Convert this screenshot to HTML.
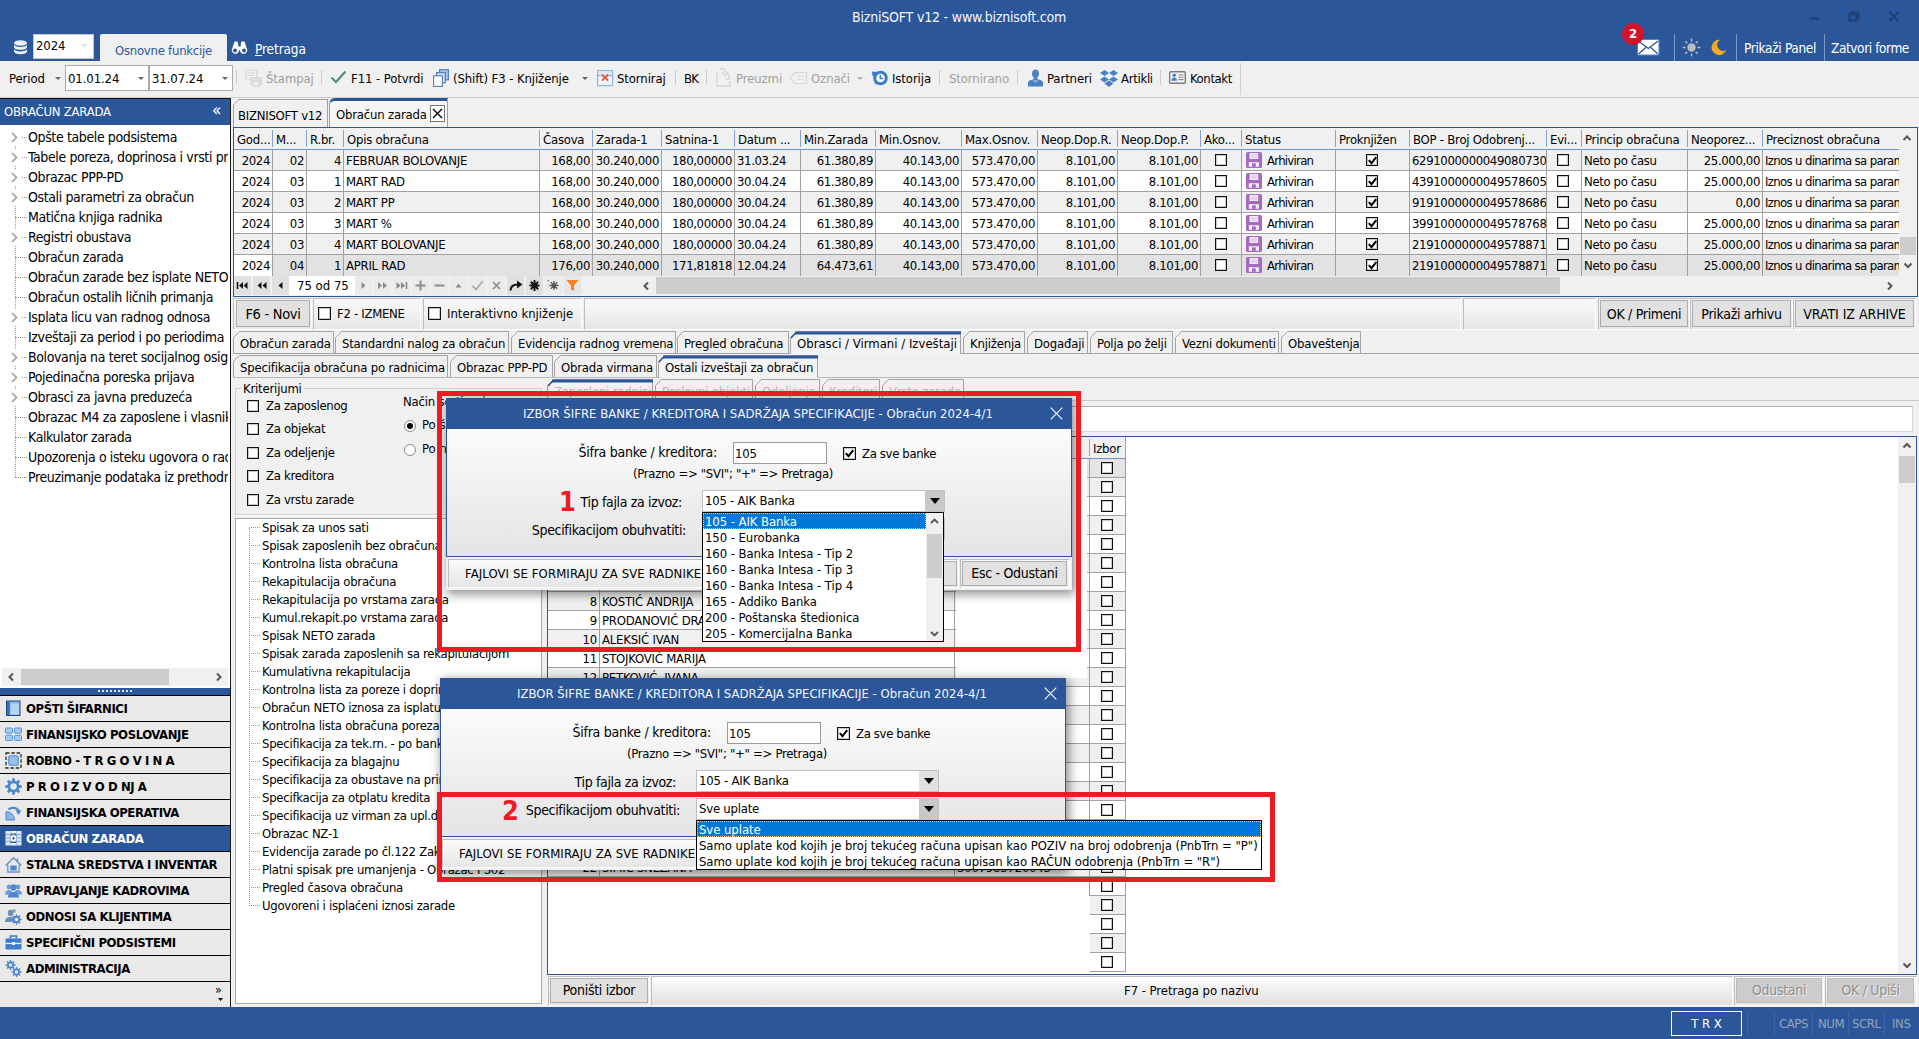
<!DOCTYPE html><html lang="sr"><head><meta charset="utf-8"><title>BizniSOFT v12</title><style>
*{box-sizing:border-box}
html,body{margin:0;padding:0}
body{width:1919px;height:1039px;overflow:hidden;background:#f0f0f0;position:relative;
 font-family:"DejaVu Sans Condensed","Liberation Sans",sans-serif;font-size:13px;color:#000;letter-spacing:-0.23px}
.a{position:absolute;white-space:nowrap}
.t{position:absolute;white-space:nowrap;line-height:16px}
.blue{background:#2b579a}
.w{color:#fff}
.f14{font-size:14px;letter-spacing:-0.3px}
.dis{color:#a0a0a0}
.tb{font-size:13px;letter-spacing:-0.1px;top:71px}
.sep{position:absolute;width:1px;background:#cdcdcd;top:70px;height:15px}
.inp{position:absolute;background:#fff;border:1px solid #ababab}
.btn{position:absolute;background:#e1e1e1;border:1px solid #adadad;text-align:center;font-size:14px;letter-spacing:-0.3px;white-space:nowrap}
.pnl{position:absolute;border:1px solid;border-color:#bdbdbd #fff #fff #bdbdbd;background:linear-gradient(#fafafa,#e6e6e6)}
.cb{position:absolute;width:13px;height:13px;border:1px solid #111;background:#fff;box-shadow:inset 0 0 0 1px rgba(0,0,0,.22)}
.tab{position:absolute;height:22px;background:#f0f0f0;border:1px solid #a0a0a0;border-bottom:none;border-radius:7px 0 0 0;padding:4px 0 0 6px;white-space:nowrap;font-size:13px;letter-spacing:-0.2px;line-height:16px;overflow:hidden}
.tab.sel{background:#f5f5f5;border-top:3px solid #2b579a;padding-top:4px}
.tree1{position:absolute;left:28px;font-size:14px;letter-spacing:-0.38px;line-height:20px;white-space:nowrap}
.tree2{position:absolute;left:262px;font-size:13px;letter-spacing:-0.27px;line-height:20px;white-space:nowrap}
.nav{position:absolute;left:0;width:230px;height:26px;background:#e9e9e9;border-top:1px solid #000;font-weight:bold;font-size:13px;letter-spacing:-0.42px;line-height:25px;padding-left:26px;white-space:nowrap}
.gh{position:absolute;top:128px;height:22px;line-height:24px;padding-left:3px;overflow:hidden;white-space:nowrap}
.gh.last:after{display:none}
.gh:after{content:'';position:absolute;right:0;top:2px;height:17px;width:1px;background:#86a3d8}
.gc{position:absolute;height:21px;line-height:22px;border-right:1px solid #a0a0a0;border-bottom:1px solid #a0a0a0;overflow:hidden;white-space:nowrap;padding:0 2px}
.r{text-align:right}
.c{text-align:center}
</style></head><body>
<div class="a blue" style="left:0;top:0;width:1919px;height:61px"></div>
<div class="t w" style="left:759px;width:400px;text-align:center;top:9px;font-size:14px;letter-spacing:-0.19px;color:#f4f6fa">BizniSOFT v12 - www.biznisoft.com</div>
<svg class="a" style="left:1800px;top:5px" width="110" height="26" viewBox="0 0 110 26"><g stroke="#1f3f75" stroke-width="2" fill="none"><path d="M9.500 13.700h9.500"/><path d="M49.500 9.500h7v6h-7z"/><path d="M51.500 9.500v-2h7v6h-2"/><path d="M89.500 7l9 9M98.500 7l-9 9" stroke-width="2.300"/></g></svg>
<svg class="a" style="left:12px;top:39px" width="17" height="17" viewBox="0 0 17 17"><g fill="#e9eef6"><ellipse cx="8.5" cy="4" rx="6.5" ry="2.8"/><path d="M2 5.6c1 1.8 3.600 2.4 6.5 2.4s5.500-.6 6.500-2.400v2.800c-1 1.800-3.600 2.400-6.500 2.400s-5.500-.6-6.500-2.400z"/><path d="M2 10c1 1.800 3.600 2.400 6.500 2.400s5.500-.6 6.500-2.400v2.800c-1 1.800-3.600 2.400-6.500 2.400s-5.500-.6-6.500-2.400z"/></g></svg>
<div class="inp" style="left:33px;top:34px;width:61px;height:25px;border-color:#c8c8c8"></div><div class="t" style="left:36px;top:38px;letter-spacing:-0.1px">2024</div>
<svg class="a" style="left:81px;top:44px" width="7" height="4"><path d="M0 0h7l-3.500 4z" fill="#e3e3e3"/></svg>
<div class="a" style="left:100px;top:34px;width:127px;height:28px;background:#f0f0f0;border-radius:2px 2px 0 0"></div><div class="t" style="left:115px;top:43px;color:#2b579a;letter-spacing:-0.25px;font-size:13px">Osnovne funkcije</div>
<svg class="a" style="left:231px;top:40px" width="17" height="15" viewBox="0 0 17 15"><g fill="#fff"><path d="M3.500 1.500h3l.7 2v3h2.600v-3l.7-2h3l2.500 7.500a3.600 3.600 0 1 1-7 1.200h-1a3.600 3.600 0 1 1-7-1.200z"/></g><circle cx="4" cy="10.500" r="2" fill="#2b579a"/><circle cx="13" cy="10.500" r="2" fill="#2b579a"/></svg>
<div class="t w" style="left:255px;top:41px;font-size:13.500px;letter-spacing:-0.1px"><span style="text-decoration:underline">P</span>retraga</div>
<svg class="a" style="left:1637px;top:39px" width="23" height="17" viewBox="0 0 23 17"><rect x="0.500" y="0.500" width="21.500" height="15.500" rx="1" fill="#fff" stroke="#4f86cf" stroke-width="1"/><path d="M1.500 2l9.800 7.500l9.800-7.500M1.500 15l7.300-6.500M21 15l-7.300-6.500" stroke="#2b579a" stroke-width="1.300" fill="none"/></svg>
<div class="a" style="left:1622px;top:23px;width:22px;height:22px;border-radius:11px;background:#d0142c"></div><div class="t w" style="left:1622px;width:22px;text-align:center;top:26px;font-weight:bold;font-size:13px;letter-spacing:0">2</div>
<div class="a" style="left:1674px;top:34px;width:1px;height:27px;background:#7f9ac4"></div>
<div class="a" style="left:1736px;top:34px;width:1px;height:27px;background:#7f9ac4"></div>
<div class="a" style="left:1824px;top:34px;width:1px;height:27px;background:#7f9ac4"></div>
<svg class="a" style="left:1682px;top:38px" width="19" height="19" viewBox="0 0 19 19"><circle cx="9.500" cy="9.500" r="4.200" fill="#b9bcc0"/><g stroke="#b9bcc0" stroke-width="1.500"><path d="M15.5 9.5L18.3 9.5"/><path d="M13.7 13.7L15.7 15.7"/><path d="M9.5 15.5L9.5 18.3"/><path d="M5.3 13.7L3.3 15.7"/><path d="M3.5 9.5L0.7 9.5"/><path d="M5.3 5.3L3.3 3.3"/><path d="M9.5 3.5L9.5 0.7"/><path d="M13.7 5.3L15.7 3.3"/></g></svg>
<svg class="a" style="left:1710px;top:39px" width="17" height="17" viewBox="0 0 17 17"><path d="M10 0.800a7.600 7.600 0 1 0 6.300 10.200a5.600 5.600 0 0 1-6.300-10.200z" fill="#f7a823"/></svg>
<div class="t w" style="left:1744px;top:40px;font-size:13.500px;letter-spacing:-0.3px">Prikaži Panel</div>
<div class="t w" style="left:1831px;top:40px;font-size:13.500px;letter-spacing:-0.4px">Zatvori forme</div>
<div class="a" style="left:0;top:61px;width:1919px;height:36px;background:#f0f0f0"></div><div class="a" style="left:0;top:97px;width:1919px;height:1px;background:#cfcfcf"></div>
<div class="t tb" style="left:9px">Period</div>
<svg class="a" style="left:55px;top:77px" width="6" height="3"><path d="M0 0h6l-3 3z" fill="#666"/></svg>
<div class="inp" style="left:65px;top:65px;width:84px;height:26px"></div><div class="t tb" style="left:68px">01.01.24</div>
<svg class="a" style="left:138px;top:77px" width="6" height="3"><path d="M0 0h6l-3 3z" fill="#666"/></svg>
<div class="inp" style="left:149px;top:65px;width:84px;height:26px"></div><div class="t tb" style="left:152px">31.07.24</div>
<svg class="a" style="left:222px;top:77px" width="6" height="3"><path d="M0 0h6l-3 3z" fill="#666"/></svg>
<div class="sep" style="left:236px"></div>
<div class="sep" style="left:321px"></div>
<div class="sep" style="left:675px"></div>
<div class="sep" style="left:706px"></div>
<div class="sep" style="left:939px"></div>
<div class="sep" style="left:1017px"></div>
<div class="sep" style="left:1160px"></div>
<div class="a" style="left:1240px;top:63px;width:1px;height:32px;background:#d0d0d0"></div>
<svg class="a" style="left:245px;top:69px" width="18" height="18" viewBox="0 0 18 18"><g fill="none" stroke="#d4d4d4" stroke-width="1.200"><path d="M1 1h11v9h-11z"/><path d="M3 4h7M3 6.500h7"/><rect x="6" y="9" width="10.500" height="6" fill="#e4e4e4"/><rect x="8" y="12" width="6.500" height="5" fill="#f0f0f0"/></g></svg>
<div class="t tb dis" style="left:266px">Štampaj</div>
<svg class="a" style="left:330px;top:70px" width="17" height="14" viewBox="0 0 17 14"><path d="M1.500 7.500l4.500 4.500l9.500-10.500" stroke="#4f9272" stroke-width="2.200" fill="none"/></svg>
<div class="t tb" style="left:351px">F11 - Potvrdi</div>
<svg class="a" style="left:432px;top:69px" width="18" height="19" viewBox="0 0 18 19"><g stroke="#4f7fc0" stroke-width="1.100"><rect x="7.600" y="0.600" width="8.800" height="10.200" fill="#a6c1e6"/><rect x="4.600" y="3.600" width="8.800" height="10.200" fill="#c9daf0"/><rect x="1.600" y="6.800" width="8.800" height="10.600" fill="#fbfcfe"/></g></svg>
<div class="t tb" style="left:453px">(Shift) F3 - Knjiženje</div>
<svg class="a" style="left:582px;top:77px" width="6" height="3"><path d="M0 0h6l-3 3z" fill="#666"/></svg>
<svg class="a" style="left:597px;top:70px" width="17" height="17" viewBox="0 0 17 17"><rect x="0.600" y="0.600" width="15" height="15" fill="#f1f6fc" stroke="#8fb3e0" stroke-width="1.200"/><rect x="1.200" y="1.200" width="13.800" height="4" fill="#dbe8f7"/><path d="M1 5.600h3.500M11.500 5.600h4" stroke="#8fb3e0" stroke-width="1.200"/><path d="M5 4.500l6.200 6.200M11.200 4.500l-6.200 6.200" stroke="#e0583a" stroke-width="1.900"/></svg>
<div class="t tb" style="left:617px">Storniraj</div>
<div class="t tb" style="left:684px;letter-spacing:-0.8px">BK</div>
<svg class="a" style="left:715px;top:68px" width="19" height="20" viewBox="0 0 19 20"><g fill="none" stroke="#d6d6d6" stroke-width="1.300"><path d="M2 3v15h13v-5"/><path d="M5 1l4 0l5 6v4h-4"/><path d="M7 4l3 3l4-1"/></g></svg>
<div class="t tb dis" style="left:736px">Preuzmi</div>
<svg class="a" style="left:789px;top:71px" width="19" height="14" viewBox="0 0 19 14"><path d="M6 1.500h11.500v11h-11.500l-5-5.500z" fill="none" stroke="#d8d8d8" stroke-width="1.200"/><path d="M8 5h7M8 8.500h7" stroke="#dcdcdc" stroke-width="1.200"/></svg>
<div class="t tb dis" style="left:811px">Označi</div>
<svg class="a" style="left:857px;top:77px" width="6" height="3"><path d="M0 0h6l-3 3z" fill="#b5b5b5"/></svg>
<svg class="a" style="left:871px;top:69px" width="18" height="18" viewBox="0 0 18 18"><circle cx="9.500" cy="9" r="5.800" fill="#fff" stroke="#3d7cc4" stroke-width="3"/><path d="M0.500 2.500l6 .5l-4.500 5z" fill="#3d7cc4"/><path d="M3 14l2.500-1l1 2.800z" fill="#3d7cc4"/><path d="M9.300 6v3.600h3" fill="none" stroke="#3d7cc4" stroke-width="1.500"/></svg>
<div class="t tb" style="left:892px">Istorija</div>
<div class="t tb dis" style="left:949px">Stornirano</div>
<svg class="a" style="left:1027px;top:69px" width="17" height="18" viewBox="0 0 17 18"><path d="M8.500 0.500c2.200 0 3.500 1.700 3.500 4c0 1.800-.7 3.300-1.700 4.100v1.300l4.200 1.700c1 .5 1.500 1.300 1.500 2.500v3.400h-15v-3.400c0-1.200.5-2 1.500-2.500l4.200-1.700v-1.300c-1-.8-1.700-2.300-1.700-4.100c0-2.300 1.300-4 3.500-4z" fill="#4a7fc0"/><path d="M6.300 10.800l2.200 2.400l2.200-2.400" stroke="#e8eef7" stroke-width=".9" fill="none"/></svg>
<div class="t tb" style="left:1047px">Partneri</div>
<svg class="a" style="left:1099px;top:70px" width="20" height="18" viewBox="0 0 20 18"><g fill="#4682c4"><path d="M5.500 0l4.500 3l-4.500 3l-4.500-3z"/><path d="M14.500 0l4.500 3l-4.500 3l-4.500-3z"/><path d="M5.500 6.500l4.500 3l-4.500 3l-4.500-3z"/><path d="M14.500 6.500l4.500 3l-4.500 3l-4.500-3z"/><path d="M10 10.500l4.500 3l-4.500 3.500l-4.500-3.500z"/></g></svg>
<div class="t tb" style="left:1121px;letter-spacing:-0.3px">Artikli</div>
<svg class="a" style="left:1169px;top:71px" width="17" height="13" viewBox="0 0 17 13"><rect x="0.700" y="0.700" width="15.600" height="11.600" rx="1" fill="#f4f4f4" stroke="#7c7c7c" stroke-width="1.400"/><circle cx="5.200" cy="4.300" r="1.700" fill="#4a7fc0"/><path d="M2.500 9.800c0-2.300 1.100-3.200 2.700-3.200s2.700.9 2.700 3.200z" fill="#4a7fc0"/><path d="M9.500 4h5M9.500 6.300h5M9.500 8.600h5" stroke="#8a8a8a" stroke-width="1.100"/></svg>
<div class="t tb" style="left:1190px;letter-spacing:-0.4px">Kontakt</div>
<div class="a" style="left:0;top:98px;width:231px;height:27px;background:#2b579a;border-top:1px solid #111;border-right:1px solid #111"></div>
<div class="t w" style="left:4px;top:104px;font-size:13px;letter-spacing:-0.25px">OBRAČUN ZARADA</div>
<div class="t w" style="left:212px;top:102px;font-size:17px">«</div>
<div class="a" style="left:0;top:125px;width:230px;height:563px;background:#fff"></div>
<div class="a" style="left:0;top:126px;width:228px;height:542px;background:#fff;overflow:hidden" id="ltree">
<div class="a" style="left:15px;top:11px;width:0;height:340px;border-left:1px dotted #9a9a9a"></div>
<div class="a" style="left:9px;top:3px;width:12px;height:16px;background:#fff"></div>
<svg class="a" style="left:11px;top:6px" width="7" height="11" viewBox="0 0 7 11"><path d="M1 1l4.500 4.500l-4.500 4.500" fill="none" stroke="#a0a0a0" stroke-width="1.700"/></svg>
<div class="a" style="left:22px;top:11px;width:5px;height:0;border-top:1px dotted #9a9a9a"></div>
<div class="tree1" style="top:1px">Opšte tabele podsistema</div>
<div class="a" style="left:9px;top:23px;width:12px;height:16px;background:#fff"></div>
<svg class="a" style="left:11px;top:26px" width="7" height="11" viewBox="0 0 7 11"><path d="M1 1l4.500 4.500l-4.500 4.500" fill="none" stroke="#a0a0a0" stroke-width="1.700"/></svg>
<div class="a" style="left:22px;top:31px;width:5px;height:0;border-top:1px dotted #9a9a9a"></div>
<div class="tree1" style="top:21px">Tabele poreza, doprinosa i vrsti prihoda</div>
<div class="a" style="left:9px;top:43px;width:12px;height:16px;background:#fff"></div>
<svg class="a" style="left:11px;top:46px" width="7" height="11" viewBox="0 0 7 11"><path d="M1 1l4.500 4.500l-4.500 4.500" fill="none" stroke="#a0a0a0" stroke-width="1.700"/></svg>
<div class="a" style="left:22px;top:51px;width:5px;height:0;border-top:1px dotted #9a9a9a"></div>
<div class="tree1" style="top:41px">Obrazac PPP-PD</div>
<div class="a" style="left:9px;top:63px;width:12px;height:16px;background:#fff"></div>
<svg class="a" style="left:11px;top:66px" width="7" height="11" viewBox="0 0 7 11"><path d="M1 1l4.500 4.500l-4.500 4.500" fill="none" stroke="#a0a0a0" stroke-width="1.700"/></svg>
<div class="a" style="left:22px;top:71px;width:5px;height:0;border-top:1px dotted #9a9a9a"></div>
<div class="tree1" style="top:61px">Ostali parametri za obračun</div>
<div class="a" style="left:15px;top:91px;width:12px;height:0;border-top:1px dotted #9a9a9a"></div>
<div class="tree1" style="top:81px">Matična knjiga radnika</div>
<div class="a" style="left:9px;top:103px;width:12px;height:16px;background:#fff"></div>
<svg class="a" style="left:11px;top:106px" width="7" height="11" viewBox="0 0 7 11"><path d="M1 1l4.500 4.500l-4.500 4.500" fill="none" stroke="#a0a0a0" stroke-width="1.700"/></svg>
<div class="a" style="left:22px;top:111px;width:5px;height:0;border-top:1px dotted #9a9a9a"></div>
<div class="tree1" style="top:101px">Registri obustava</div>
<div class="a" style="left:15px;top:131px;width:12px;height:0;border-top:1px dotted #9a9a9a"></div>
<div class="tree1" style="top:121px">Obračun zarada</div>
<div class="a" style="left:15px;top:151px;width:12px;height:0;border-top:1px dotted #9a9a9a"></div>
<div class="tree1" style="top:141px">Obračun zarade bez isplate NETO</div>
<div class="a" style="left:15px;top:171px;width:12px;height:0;border-top:1px dotted #9a9a9a"></div>
<div class="tree1" style="top:161px">Obračun ostalih ličnih primanja</div>
<div class="a" style="left:9px;top:183px;width:12px;height:16px;background:#fff"></div>
<svg class="a" style="left:11px;top:186px" width="7" height="11" viewBox="0 0 7 11"><path d="M1 1l4.500 4.500l-4.500 4.500" fill="none" stroke="#a0a0a0" stroke-width="1.700"/></svg>
<div class="a" style="left:22px;top:191px;width:5px;height:0;border-top:1px dotted #9a9a9a"></div>
<div class="tree1" style="top:181px">Isplata licu van radnog odnosa</div>
<div class="a" style="left:15px;top:211px;width:12px;height:0;border-top:1px dotted #9a9a9a"></div>
<div class="tree1" style="top:201px">Izveštaji za period i po periodima</div>
<div class="a" style="left:9px;top:223px;width:12px;height:16px;background:#fff"></div>
<svg class="a" style="left:11px;top:226px" width="7" height="11" viewBox="0 0 7 11"><path d="M1 1l4.500 4.500l-4.500 4.500" fill="none" stroke="#a0a0a0" stroke-width="1.700"/></svg>
<div class="a" style="left:22px;top:231px;width:5px;height:0;border-top:1px dotted #9a9a9a"></div>
<div class="tree1" style="top:221px">Bolovanja na teret socijalnog osiguranja</div>
<div class="a" style="left:9px;top:243px;width:12px;height:16px;background:#fff"></div>
<svg class="a" style="left:11px;top:246px" width="7" height="11" viewBox="0 0 7 11"><path d="M1 1l4.500 4.500l-4.500 4.500" fill="none" stroke="#a0a0a0" stroke-width="1.700"/></svg>
<div class="a" style="left:22px;top:251px;width:5px;height:0;border-top:1px dotted #9a9a9a"></div>
<div class="tree1" style="top:241px">Pojedinačna poreska prijava</div>
<div class="a" style="left:9px;top:263px;width:12px;height:16px;background:#fff"></div>
<svg class="a" style="left:11px;top:266px" width="7" height="11" viewBox="0 0 7 11"><path d="M1 1l4.500 4.500l-4.500 4.500" fill="none" stroke="#a0a0a0" stroke-width="1.700"/></svg>
<div class="a" style="left:22px;top:271px;width:5px;height:0;border-top:1px dotted #9a9a9a"></div>
<div class="tree1" style="top:261px">Obrasci za javna preduzeća</div>
<div class="a" style="left:15px;top:291px;width:12px;height:0;border-top:1px dotted #9a9a9a"></div>
<div class="tree1" style="top:281px">Obrazac M4 za zaposlene i vlasnike</div>
<div class="a" style="left:15px;top:311px;width:12px;height:0;border-top:1px dotted #9a9a9a"></div>
<div class="tree1" style="top:301px">Kalkulator zarada</div>
<div class="a" style="left:15px;top:331px;width:12px;height:0;border-top:1px dotted #9a9a9a"></div>
<div class="tree1" style="top:321px">Upozorenja o isteku ugovora o radu</div>
<div class="a" style="left:15px;top:351px;width:12px;height:0;border-top:1px dotted #9a9a9a"></div>
<div class="tree1" style="top:341px">Preuzimanje podataka iz prethodne godine</div>
</div>
<div class="a" style="left:2px;top:668px;width:226px;height:18px;background:#f0f0f0"></div><div class="a" style="left:21px;top:669px;width:148px;height:16px;background:#cdcdcd"></div>
<svg class="a" style="left:8px;top:672px" width="7" height="10" viewBox="0 0 7 10"><path d="M5 1.500l-3.500 3.500l3.500 3.500" fill="none" stroke="#555" stroke-width="2"/></svg>
<svg class="a" style="left:215px;top:672px" width="7" height="10" viewBox="0 0 7 10"><path d="M2 1.500l3.500 3.500l-3.500 3.500" fill="none" stroke="#555" stroke-width="2"/></svg>
<div class="a blue" style="left:0;top:688px;width:230px;height:8px"></div>
<div class="a" style="left:98px;top:690px;width:35px;height:2px;background:repeating-linear-gradient(90deg,#dfe6f2 0 2px,transparent 2px 4px)"></div>
<div class="nav" style="top:695px;">OPŠTI ŠIFARNICI</div>
<svg class="a" style="left:5px;top:700px" width="17" height="17" viewBox="0 0 17 17"><rect x="1.500" y="1" width="13.500" height="14.500" fill="#86b7ec" stroke="#24477d"/><rect x="2" y="1.500" width="2.800" height="13.500" fill="#3b6db3"/><rect x="5.500" y="3.500" width="8.500" height="11" fill="#b4d6f6"/></svg>
<div class="nav" style="top:721px;">FINANSIJSKO POSLOVANJE</div>
<svg class="a" style="left:5px;top:726px" width="17" height="17" viewBox="0 0 17 17"><g fill="#a3cbf2" stroke="#5b93d6"><rect x="0.500" y="2" width="7" height="5.200" rx="1"/><rect x="9.500" y="2" width="7" height="5.200" rx="1"/><rect x="0.500" y="9.300" width="7" height="5.200" rx="1"/><rect x="9.500" y="9.300" width="7" height="5.200" rx="1"/></g></svg>
<div class="nav" style="top:747px;">ROBNO - T R G O V I N A</div>
<svg class="a" style="left:5px;top:752px" width="17" height="17" viewBox="0 0 17 17"><rect x="1" y="1" width="15" height="15" fill="none" stroke="#2b2b2b" stroke-width="1.300" stroke-dasharray="3.500 1.800"/><rect x="3.800" y="3.800" width="9.400" height="9.400" rx="1" fill="#94c0ef" stroke="#4f86cc"/></svg>
<div class="nav" style="top:773px;">P R O I Z V O D NJ A</div>
<svg class="a" style="left:5px;top:778px" width="17" height="17" viewBox="0 0 17 17"><path d="M14.33 7.10L16.72 7.33L16.72 9.67L14.33 9.90L13.62 11.63L15.14 13.48L13.48 15.14L11.63 13.62L9.90 14.33L9.67 16.72L7.33 16.72L7.10 14.33L5.37 13.62L3.52 15.14L1.86 13.48L3.38 11.63L2.67 9.90L0.28 9.67L0.28 7.33L2.67 7.10L3.38 5.37L1.86 3.52L3.52 1.86L5.37 3.38L7.10 2.67L7.33 0.28L9.67 0.28L9.90 2.67L11.63 3.38L13.48 1.86L15.14 3.52L13.62 5.37ZM11.70 8.5A3.2 3.2 0 1 0 5.30 8.5A3.2 3.2 0 1 0 11.70 8.5Z" fill="#4a86cf" fill-rule="evenodd"/></svg>
<div class="nav" style="top:799px;">FINANSIJSKA OPERATIVA</div>
<svg class="a" style="left:5px;top:804px" width="17" height="17" viewBox="0 0 17 17"><path d="M1 16v-8.500a8.500 8.500 0 0 1 8.500 8.500z" fill="#86b7ec" stroke="#4f86cc"/><path d="M3.500 5.500a6.500 5.500 0 0 1 10.500 1.500" fill="none" stroke="#4f86cc" stroke-width="2.200"/><path d="M10.500 6.500h6l-3 4.500z" fill="#4f86cc"/></svg>
<div class="nav" style="top:825px;background:#2b579a;color:#fff;">OBRAČUN ZARADA</div>
<svg class="a" style="left:5px;top:830px" width="17" height="17" viewBox="0 0 17 17"><rect x="0.500" y="1" width="5" height="14.500" fill="#dbe7f7"/><rect x="11.500" y="1" width="5" height="14.500" fill="#dbe7f7"/><path d="M.5 4.500h5M.5 8h5M.5 11.500h5M11.500 4.500h5M11.500 8h5M11.500 11.500h5" stroke="#7fa6da"/><rect x="5.500" y="1" width="6" height="2.500" fill="#eef3fa"/><rect x="5.500" y="13" width="6" height="2.500" fill="#eef3fa"/><circle cx="8.500" cy="8.300" r="3.600" fill="#fff" stroke="#7fa6da"/><path d="M7 8.300h3M8.500 6.800v3" stroke="#2b579a"/></svg>
<div class="nav" style="top:851px;">STALNA SREDSTVA I INVENTAR</div>
<svg class="a" style="left:5px;top:856px" width="17" height="17" viewBox="0 0 17 17"><path d="M.8 9.500l7.700-7.700l7.700 7.700" fill="none" stroke="#6d93c4" stroke-width="1.600"/><path d="M12.500 2.500v3.500" stroke="#6d93c4" stroke-width="1.600"/><path d="M2.800 8.500v7.500h11.400v-7.500" fill="none" stroke="#6d93c4" stroke-width="1.300"/><rect x="5.300" y="9.500" width="6.400" height="5" fill="#4f86cc"/></svg>
<div class="nav" style="top:877px;">UPRAVLJANJE KADROVIMA</div>
<svg class="a" style="left:5px;top:882px" width="17" height="17" viewBox="0 0 17 17"><g fill="#6a9bd8"><circle cx="4" cy="5" r="2.400"/><circle cx="13" cy="5" r="2.400"/><path d="M0 12.500c0-3 1.500-4.500 4-4.500s3 1 3 2v2.500zM17 12.500c0-3-1.500-4.500-4-4.500s-3 1-3 2v2.500z"/></g><g fill="#4f86cc"><ellipse cx="8.500" cy="5.500" rx="2.800" ry="3.300"/><path d="M3 15.500c0-4 2.300-5.500 5.500-5.500s5.500 1.500 5.500 5.500z"/></g></svg>
<div class="nav" style="top:903px;">ODNOSI SA KLIJENTIMA</div>
<svg class="a" style="left:5px;top:908px" width="17" height="17" viewBox="0 0 17 17"><g fill="#6f8db5"><ellipse cx="5.500" cy="5" rx="2.700" ry="3.200"/><path d="M0 14c0-3.500 2-5 5.500-5c1.500 0 2.500.3 3.300.8l-1.300 4.200z"/><circle cx="9" cy="3" r="2" opacity=".7"/></g><path d="M15.10 10.64L16.75 10.75L16.75 12.25L15.10 12.36L14.65 13.43L15.74 14.68L14.68 15.74L13.43 14.65L12.36 15.10L12.25 16.75L10.75 16.75L10.64 15.10L9.57 14.65L8.32 15.74L7.26 14.68L8.35 13.43L7.90 12.36L6.25 12.25L6.25 10.75L7.90 10.64L8.35 9.57L7.26 8.32L8.32 7.26L9.57 8.35L10.64 7.90L10.75 6.25L12.25 6.25L12.36 7.90L13.43 8.35L14.68 7.26L15.74 8.32L14.65 9.57ZM13.30 11.5A1.8 1.8 0 1 0 9.70 11.5A1.8 1.8 0 1 0 13.30 11.5Z" fill="#4f86cc" fill-rule="evenodd"/></svg>
<div class="nav" style="top:929px;">SPECIFIČNI PODSISTEMI</div>
<svg class="a" style="left:5px;top:934px" width="17" height="17" viewBox="0 0 17 17"><path d="M5.500 4.500v-2.500h6v2.500" fill="none" stroke="#3f7ccb" stroke-width="1.600"/><rect x="0.500" y="4.500" width="16" height="11" rx="1" fill="#3f7ccb"/><rect x="0.500" y="8.800" width="16" height="1.300" fill="#e6eef9"/><rect x="7" y="8" width="3" height="3" fill="#e6eef9"/></svg>
<div class="nav" style="top:955px;">ADMINISTRACIJA</div>
<svg class="a" style="left:5px;top:960px" width="17" height="17" viewBox="0 0 17 17"><path d="M8.90 4.18L10.45 4.30L10.45 5.70L8.90 5.82L8.48 6.83L9.50 8.00L8.50 9.00L7.33 7.98L6.32 8.40L6.20 9.95L4.80 9.95L4.68 8.40L3.67 7.98L2.50 9.00L1.50 8.00L2.52 6.83L2.10 5.82L0.55 5.70L0.55 4.30L2.10 4.18L2.52 3.17L1.50 2.00L2.50 1.00L3.67 2.02L4.68 1.60L4.80 0.05L6.20 0.05L6.32 1.60L7.33 2.02L8.50 1.00L9.50 2.00L8.48 3.17ZM7.20 5A1.7 1.7 0 1 0 3.80 5A1.7 1.7 0 1 0 7.20 5Z" fill="#4f86cc" fill-rule="evenodd"/><path d="M14.90 11.18L16.45 11.30L16.45 12.70L14.90 12.82L14.48 13.83L15.50 15.00L14.50 16.00L13.33 14.98L12.32 15.40L12.20 16.95L10.80 16.95L10.68 15.40L9.67 14.98L8.50 16.00L7.50 15.00L8.52 13.83L8.10 12.82L6.55 12.70L6.55 11.30L8.10 11.18L8.52 10.17L7.50 9.00L8.50 8.00L9.67 9.02L10.68 8.60L10.80 7.05L12.20 7.05L12.32 8.60L13.33 9.02L14.50 8.00L15.50 9.00L14.48 10.17ZM13.20 12A1.7 1.7 0 1 0 9.80 12A1.7 1.7 0 1 0 13.20 12Z" fill="#4f86cc" fill-rule="evenodd"/></svg>
<div class="a" style="left:0;top:981px;width:230px;height:26px;background:#e9e9e9;border-top:1px solid #000"></div>
<div class="t" style="left:215px;top:982px;font-size:12px">»</div>
<svg class="a" style="left:218px;top:998px" width="5" height="3"><path d="M0 0h5l-2.500 3z" fill="#000"/></svg>
<div class="a" style="left:230px;top:98px;width:1px;height:909px;background:#1a1a1a"></div>
<div class="a blue" style="left:0;top:1007px;width:1919px;height:32px"></div>
<div class="a" style="left:1671px;top:1011px;width:71px;height:25px;border:1px solid #fff"></div><div class="t w" style="left:1671px;width:71px;text-align:center;top:1016px;font-size:13px;letter-spacing:0">T R X</div>
<div class="a" style="left:1747px;top:1011px;width:1px;height:25px;background:#3a66a8"></div>
<div class="a" style="left:1774px;top:1011px;width:1px;height:25px;background:#3a66a8"></div>
<div class="a" style="left:1812px;top:1011px;width:1px;height:25px;background:#3a66a8"></div>
<div class="a" style="left:1848px;top:1011px;width:1px;height:25px;background:#3a66a8"></div>
<div class="a" style="left:1884px;top:1011px;width:1px;height:25px;background:#3a66a8"></div>
<div class="t" style="left:1779px;top:1016px;color:#94a3ba;letter-spacing:-0.4px">CAPS</div>
<div class="t" style="left:1818px;top:1016px;color:#94a3ba;letter-spacing:-0.4px">NUM</div>
<div class="t" style="left:1852px;top:1016px;color:#94a3ba;letter-spacing:-0.4px">SCRL</div>
<div class="t" style="left:1892px;top:1016px;color:#94a3ba;letter-spacing:-0.4px">INS</div>
<div class="tab" style="left:233px;top:99px;width:95px;height:28px;font-size:13px;letter-spacing:-0.25px;padding:8px 0 0 4px;border-radius:0;clip-path:polygon(6px 0,100% 0,100% 100%,0 100%,0 6px)">BIZNISOFT v12</div><svg class="a" style="left:233px;top:99px" width="7" height="7"><path d="M0 6.500L6.500 0" stroke="#a0a0a0"/></svg>
<div class="tab sel" style="left:329px;top:98px;width:119px;height:29px;font-size:13px;letter-spacing:-0.2px;padding:6px 0 0 6px;border-radius:6px 0 0 0">Obračun zarada</div>
<div class="a" style="left:430px;top:105px;width:15px;height:17px;border:1px solid #777;background:#fff"></div><svg class="a" style="left:432px;top:108px" width="11" height="11" viewBox="0 0 11 11"><path d="M1 1l9 9M10 1l-9 9" stroke="#000" stroke-width="1.400"/></svg>
<div class="a" style="left:233px;top:127px;width:1685px;height:170px;background:#f0f0f0;border:1px solid #2b579a"></div>
<div class="a" style="left:234px;top:128px;width:1665px;height:22px;background:#f0f0f0;border-bottom:1px solid #6f93c9"></div>
<div class="gh" style="left:234px;width:39px">God...</div>
<div class="gh" style="left:273px;width:34px">M...</div>
<div class="gh" style="left:307px;width:37px">R.br.</div>
<div class="gh" style="left:344px;width:196px">Opis obračuna</div>
<div class="gh" style="left:540px;width:53px">Časova</div>
<div class="gh" style="left:593px;width:69px">Zarada-1</div>
<div class="gh" style="left:662px;width:73px">Satnina-1</div>
<div class="gh" style="left:735px;width:66px">Datum ...</div>
<div class="gh" style="left:801px;width:75px">Min.Zarada</div>
<div class="gh" style="left:876px;width:86px">Min.Osnov.</div>
<div class="gh" style="left:962px;width:76px">Max.Osnov.</div>
<div class="gh" style="left:1038px;width:80px">Neop.Dop.R.</div>
<div class="gh" style="left:1118px;width:83px">Neop.Dop.P.</div>
<div class="gh" style="left:1201px;width:41px">Ako...</div>
<div class="gh" style="left:1242px;width:94px">Status</div>
<div class="gh" style="left:1336px;width:74px">Proknjižen</div>
<div class="gh" style="left:1410px;width:137px">BOP - Broj Odobrenj...</div>
<div class="gh" style="left:1547px;width:35px">Evi...</div>
<div class="gh" style="left:1582px;width:106px">Princip obračuna</div>
<div class="gh" style="left:1688px;width:75px">Neoporez...</div>
<div class="gh last" style="left:1763px;width:136px">Preciznost obračuna</div>
<div class="gc r" style="left:234px;top:150px;width:39px;background:#f0f0f0;letter-spacing:-0.36px;">2024</div>
<div class="gc r" style="left:273px;top:150px;width:34px;background:#f0f0f0;letter-spacing:-0.36px;">02</div>
<div class="gc r" style="left:307px;top:150px;width:37px;background:#f0f0f0;letter-spacing:-0.36px;">4</div>
<div class="gc " style="left:344px;top:150px;width:196px;background:#f0f0f0;letter-spacing:-0.25px;">FEBRUAR BOLOVANJE</div>
<div class="gc r" style="left:540px;top:150px;width:53px;background:#f0f0f0;letter-spacing:-0.36px;">168,00</div>
<div class="gc r" style="left:593px;top:150px;width:69px;background:#f0f0f0;letter-spacing:-0.36px;">30.240,000</div>
<div class="gc r" style="left:662px;top:150px;width:73px;background:#f0f0f0;letter-spacing:-0.36px;">180,00000</div>
<div class="gc " style="left:735px;top:150px;width:66px;background:#f0f0f0;letter-spacing:-0.36px;">31.03.24</div>
<div class="gc r" style="left:801px;top:150px;width:75px;background:#f0f0f0;letter-spacing:-0.36px;">61.380,89</div>
<div class="gc r" style="left:876px;top:150px;width:86px;background:#f0f0f0;letter-spacing:-0.36px;">40.143,00</div>
<div class="gc r" style="left:962px;top:150px;width:76px;background:#f0f0f0;letter-spacing:-0.36px;">573.470,00</div>
<div class="gc r" style="left:1038px;top:150px;width:80px;background:#f0f0f0;letter-spacing:-0.36px;">8.101,00</div>
<div class="gc r" style="left:1118px;top:150px;width:83px;background:#f0f0f0;letter-spacing:-0.36px;">8.101,00</div>
<div class="gc" style="left:1201px;top:150px;width:41px;background:#f0f0f0"></div><div class="cb" style="left:1215px;top:154px;width:12px;height:12px"></div>
<div class="gc" style="left:1242px;top:150px;width:94px;background:#f0f0f0;padding-left:25px;letter-spacing:-0.72px">Arhiviran</div><svg class="a" style="left:1246px;top:152px" width="16" height="16" viewBox="0 0 16 16"><rect x="0" y="0" width="16" height="16" rx="1.600" fill="#a66bbe"/><rect x="3.600" y="1" width="8.600" height="6" fill="#f3eaf8"/><path d="M5 3h6M5 5h6" stroke="#cdbbd8" stroke-width=".9"/><rect x="2.800" y="10.200" width="10.200" height="4.600" fill="#f3eaf8"/><rect x="6" y="11.400" width="3.800" height="3.400" fill="#a66bbe"/></svg>
<div class="gc" style="left:1336px;top:150px;width:74px;background:#f0f0f0"></div><div class="cb" style="left:1366px;top:154px;width:12px;height:12px"></div><svg class="a" style="left:1368px;top:156px" width="9" height="9" viewBox="0 0 9 9"><path d="M0.800 4.200l2.700 3l4.700-6" fill="none" stroke="#000" stroke-width="2"/></svg>
<div class="gc " style="left:1410px;top:150px;width:137px;background:#f0f0f0;letter-spacing:-0.36px;">6291000000049080730</div>
<div class="gc" style="left:1547px;top:150px;width:35px;background:#f0f0f0"></div><div class="cb" style="left:1557px;top:154px;width:12px;height:12px"></div>
<div class="gc " style="left:1582px;top:150px;width:106px;background:#f0f0f0;letter-spacing:-0.36px;">Neto po času</div>
<div class="gc r" style="left:1688px;top:150px;width:75px;background:#f0f0f0;letter-spacing:-0.36px;">25.000,00</div>
<div class="gc " style="left:1763px;top:150px;width:136px;background:#f0f0f0;letter-spacing:-0.65px;border-right:none;">Iznos u dinarima sa parama</div>
<div class="gc r" style="left:234px;top:171px;width:39px;background:#fff;letter-spacing:-0.36px;">2024</div>
<div class="gc r" style="left:273px;top:171px;width:34px;background:#fff;letter-spacing:-0.36px;">03</div>
<div class="gc r" style="left:307px;top:171px;width:37px;background:#fff;letter-spacing:-0.36px;">1</div>
<div class="gc " style="left:344px;top:171px;width:196px;background:#fff;letter-spacing:-0.25px;">MART RAD</div>
<div class="gc r" style="left:540px;top:171px;width:53px;background:#fff;letter-spacing:-0.36px;">168,00</div>
<div class="gc r" style="left:593px;top:171px;width:69px;background:#fff;letter-spacing:-0.36px;">30.240,000</div>
<div class="gc r" style="left:662px;top:171px;width:73px;background:#fff;letter-spacing:-0.36px;">180,00000</div>
<div class="gc " style="left:735px;top:171px;width:66px;background:#fff;letter-spacing:-0.36px;">30.04.24</div>
<div class="gc r" style="left:801px;top:171px;width:75px;background:#fff;letter-spacing:-0.36px;">61.380,89</div>
<div class="gc r" style="left:876px;top:171px;width:86px;background:#fff;letter-spacing:-0.36px;">40.143,00</div>
<div class="gc r" style="left:962px;top:171px;width:76px;background:#fff;letter-spacing:-0.36px;">573.470,00</div>
<div class="gc r" style="left:1038px;top:171px;width:80px;background:#fff;letter-spacing:-0.36px;">8.101,00</div>
<div class="gc r" style="left:1118px;top:171px;width:83px;background:#fff;letter-spacing:-0.36px;">8.101,00</div>
<div class="gc" style="left:1201px;top:171px;width:41px;background:#fff"></div><div class="cb" style="left:1215px;top:175px;width:12px;height:12px"></div>
<div class="gc" style="left:1242px;top:171px;width:94px;background:#fff;padding-left:25px;letter-spacing:-0.72px">Arhiviran</div><svg class="a" style="left:1246px;top:173px" width="16" height="16" viewBox="0 0 16 16"><rect x="0" y="0" width="16" height="16" rx="1.600" fill="#a66bbe"/><rect x="3.600" y="1" width="8.600" height="6" fill="#f3eaf8"/><path d="M5 3h6M5 5h6" stroke="#cdbbd8" stroke-width=".9"/><rect x="2.800" y="10.200" width="10.200" height="4.600" fill="#f3eaf8"/><rect x="6" y="11.400" width="3.800" height="3.400" fill="#a66bbe"/></svg>
<div class="gc" style="left:1336px;top:171px;width:74px;background:#fff"></div><div class="cb" style="left:1366px;top:175px;width:12px;height:12px"></div><svg class="a" style="left:1368px;top:177px" width="9" height="9" viewBox="0 0 9 9"><path d="M0.800 4.200l2.700 3l4.700-6" fill="none" stroke="#000" stroke-width="2"/></svg>
<div class="gc " style="left:1410px;top:171px;width:137px;background:#fff;letter-spacing:-0.36px;">4391000000049578605</div>
<div class="gc" style="left:1547px;top:171px;width:35px;background:#fff"></div><div class="cb" style="left:1557px;top:175px;width:12px;height:12px"></div>
<div class="gc " style="left:1582px;top:171px;width:106px;background:#fff;letter-spacing:-0.36px;">Neto po času</div>
<div class="gc r" style="left:1688px;top:171px;width:75px;background:#fff;letter-spacing:-0.36px;">25.000,00</div>
<div class="gc " style="left:1763px;top:171px;width:136px;background:#fff;letter-spacing:-0.65px;border-right:none;">Iznos u dinarima sa parama</div>
<div class="gc r" style="left:234px;top:192px;width:39px;background:#f0f0f0;letter-spacing:-0.36px;">2024</div>
<div class="gc r" style="left:273px;top:192px;width:34px;background:#f0f0f0;letter-spacing:-0.36px;">03</div>
<div class="gc r" style="left:307px;top:192px;width:37px;background:#f0f0f0;letter-spacing:-0.36px;">2</div>
<div class="gc " style="left:344px;top:192px;width:196px;background:#f0f0f0;letter-spacing:-0.25px;">MART PP</div>
<div class="gc r" style="left:540px;top:192px;width:53px;background:#f0f0f0;letter-spacing:-0.36px;">168,00</div>
<div class="gc r" style="left:593px;top:192px;width:69px;background:#f0f0f0;letter-spacing:-0.36px;">30.240,000</div>
<div class="gc r" style="left:662px;top:192px;width:73px;background:#f0f0f0;letter-spacing:-0.36px;">180,00000</div>
<div class="gc " style="left:735px;top:192px;width:66px;background:#f0f0f0;letter-spacing:-0.36px;">30.04.24</div>
<div class="gc r" style="left:801px;top:192px;width:75px;background:#f0f0f0;letter-spacing:-0.36px;">61.380,89</div>
<div class="gc r" style="left:876px;top:192px;width:86px;background:#f0f0f0;letter-spacing:-0.36px;">40.143,00</div>
<div class="gc r" style="left:962px;top:192px;width:76px;background:#f0f0f0;letter-spacing:-0.36px;">573.470,00</div>
<div class="gc r" style="left:1038px;top:192px;width:80px;background:#f0f0f0;letter-spacing:-0.36px;">8.101,00</div>
<div class="gc r" style="left:1118px;top:192px;width:83px;background:#f0f0f0;letter-spacing:-0.36px;">8.101,00</div>
<div class="gc" style="left:1201px;top:192px;width:41px;background:#f0f0f0"></div><div class="cb" style="left:1215px;top:196px;width:12px;height:12px"></div>
<div class="gc" style="left:1242px;top:192px;width:94px;background:#f0f0f0;padding-left:25px;letter-spacing:-0.72px">Arhiviran</div><svg class="a" style="left:1246px;top:194px" width="16" height="16" viewBox="0 0 16 16"><rect x="0" y="0" width="16" height="16" rx="1.600" fill="#a66bbe"/><rect x="3.600" y="1" width="8.600" height="6" fill="#f3eaf8"/><path d="M5 3h6M5 5h6" stroke="#cdbbd8" stroke-width=".9"/><rect x="2.800" y="10.200" width="10.200" height="4.600" fill="#f3eaf8"/><rect x="6" y="11.400" width="3.800" height="3.400" fill="#a66bbe"/></svg>
<div class="gc" style="left:1336px;top:192px;width:74px;background:#f0f0f0"></div><div class="cb" style="left:1366px;top:196px;width:12px;height:12px"></div><svg class="a" style="left:1368px;top:198px" width="9" height="9" viewBox="0 0 9 9"><path d="M0.800 4.200l2.700 3l4.700-6" fill="none" stroke="#000" stroke-width="2"/></svg>
<div class="gc " style="left:1410px;top:192px;width:137px;background:#f0f0f0;letter-spacing:-0.36px;">9191000000049578686</div>
<div class="gc" style="left:1547px;top:192px;width:35px;background:#f0f0f0"></div><div class="cb" style="left:1557px;top:196px;width:12px;height:12px"></div>
<div class="gc " style="left:1582px;top:192px;width:106px;background:#f0f0f0;letter-spacing:-0.36px;">Neto po času</div>
<div class="gc r" style="left:1688px;top:192px;width:75px;background:#f0f0f0;letter-spacing:-0.36px;">0,00</div>
<div class="gc " style="left:1763px;top:192px;width:136px;background:#f0f0f0;letter-spacing:-0.65px;border-right:none;">Iznos u dinarima sa parama</div>
<div class="gc r" style="left:234px;top:213px;width:39px;background:#fff;letter-spacing:-0.36px;">2024</div>
<div class="gc r" style="left:273px;top:213px;width:34px;background:#fff;letter-spacing:-0.36px;">03</div>
<div class="gc r" style="left:307px;top:213px;width:37px;background:#fff;letter-spacing:-0.36px;">3</div>
<div class="gc " style="left:344px;top:213px;width:196px;background:#fff;letter-spacing:-0.25px;">MART %</div>
<div class="gc r" style="left:540px;top:213px;width:53px;background:#fff;letter-spacing:-0.36px;">168,00</div>
<div class="gc r" style="left:593px;top:213px;width:69px;background:#fff;letter-spacing:-0.36px;">30.240,000</div>
<div class="gc r" style="left:662px;top:213px;width:73px;background:#fff;letter-spacing:-0.36px;">180,00000</div>
<div class="gc " style="left:735px;top:213px;width:66px;background:#fff;letter-spacing:-0.36px;">30.04.24</div>
<div class="gc r" style="left:801px;top:213px;width:75px;background:#fff;letter-spacing:-0.36px;">61.380,89</div>
<div class="gc r" style="left:876px;top:213px;width:86px;background:#fff;letter-spacing:-0.36px;">40.143,00</div>
<div class="gc r" style="left:962px;top:213px;width:76px;background:#fff;letter-spacing:-0.36px;">573.470,00</div>
<div class="gc r" style="left:1038px;top:213px;width:80px;background:#fff;letter-spacing:-0.36px;">8.101,00</div>
<div class="gc r" style="left:1118px;top:213px;width:83px;background:#fff;letter-spacing:-0.36px;">8.101,00</div>
<div class="gc" style="left:1201px;top:213px;width:41px;background:#fff"></div><div class="cb" style="left:1215px;top:217px;width:12px;height:12px"></div>
<div class="gc" style="left:1242px;top:213px;width:94px;background:#fff;padding-left:25px;letter-spacing:-0.72px">Arhiviran</div><svg class="a" style="left:1246px;top:215px" width="16" height="16" viewBox="0 0 16 16"><rect x="0" y="0" width="16" height="16" rx="1.600" fill="#a66bbe"/><rect x="3.600" y="1" width="8.600" height="6" fill="#f3eaf8"/><path d="M5 3h6M5 5h6" stroke="#cdbbd8" stroke-width=".9"/><rect x="2.800" y="10.200" width="10.200" height="4.600" fill="#f3eaf8"/><rect x="6" y="11.400" width="3.800" height="3.400" fill="#a66bbe"/></svg>
<div class="gc" style="left:1336px;top:213px;width:74px;background:#fff"></div><div class="cb" style="left:1366px;top:217px;width:12px;height:12px"></div><svg class="a" style="left:1368px;top:219px" width="9" height="9" viewBox="0 0 9 9"><path d="M0.800 4.200l2.700 3l4.700-6" fill="none" stroke="#000" stroke-width="2"/></svg>
<div class="gc " style="left:1410px;top:213px;width:137px;background:#fff;letter-spacing:-0.36px;">3991000000049578768</div>
<div class="gc" style="left:1547px;top:213px;width:35px;background:#fff"></div><div class="cb" style="left:1557px;top:217px;width:12px;height:12px"></div>
<div class="gc " style="left:1582px;top:213px;width:106px;background:#fff;letter-spacing:-0.36px;">Neto po času</div>
<div class="gc r" style="left:1688px;top:213px;width:75px;background:#fff;letter-spacing:-0.36px;">25.000,00</div>
<div class="gc " style="left:1763px;top:213px;width:136px;background:#fff;letter-spacing:-0.65px;border-right:none;">Iznos u dinarima sa parama</div>
<div class="gc r" style="left:234px;top:234px;width:39px;background:#f0f0f0;letter-spacing:-0.36px;">2024</div>
<div class="gc r" style="left:273px;top:234px;width:34px;background:#f0f0f0;letter-spacing:-0.36px;">03</div>
<div class="gc r" style="left:307px;top:234px;width:37px;background:#f0f0f0;letter-spacing:-0.36px;">4</div>
<div class="gc " style="left:344px;top:234px;width:196px;background:#f0f0f0;letter-spacing:-0.25px;">MART BOLOVANJE</div>
<div class="gc r" style="left:540px;top:234px;width:53px;background:#f0f0f0;letter-spacing:-0.36px;">168,00</div>
<div class="gc r" style="left:593px;top:234px;width:69px;background:#f0f0f0;letter-spacing:-0.36px;">30.240,000</div>
<div class="gc r" style="left:662px;top:234px;width:73px;background:#f0f0f0;letter-spacing:-0.36px;">180,00000</div>
<div class="gc " style="left:735px;top:234px;width:66px;background:#f0f0f0;letter-spacing:-0.36px;">30.04.24</div>
<div class="gc r" style="left:801px;top:234px;width:75px;background:#f0f0f0;letter-spacing:-0.36px;">61.380,89</div>
<div class="gc r" style="left:876px;top:234px;width:86px;background:#f0f0f0;letter-spacing:-0.36px;">40.143,00</div>
<div class="gc r" style="left:962px;top:234px;width:76px;background:#f0f0f0;letter-spacing:-0.36px;">573.470,00</div>
<div class="gc r" style="left:1038px;top:234px;width:80px;background:#f0f0f0;letter-spacing:-0.36px;">8.101,00</div>
<div class="gc r" style="left:1118px;top:234px;width:83px;background:#f0f0f0;letter-spacing:-0.36px;">8.101,00</div>
<div class="gc" style="left:1201px;top:234px;width:41px;background:#f0f0f0"></div><div class="cb" style="left:1215px;top:238px;width:12px;height:12px"></div>
<div class="gc" style="left:1242px;top:234px;width:94px;background:#f0f0f0;padding-left:25px;letter-spacing:-0.72px">Arhiviran</div><svg class="a" style="left:1246px;top:236px" width="16" height="16" viewBox="0 0 16 16"><rect x="0" y="0" width="16" height="16" rx="1.600" fill="#a66bbe"/><rect x="3.600" y="1" width="8.600" height="6" fill="#f3eaf8"/><path d="M5 3h6M5 5h6" stroke="#cdbbd8" stroke-width=".9"/><rect x="2.800" y="10.200" width="10.200" height="4.600" fill="#f3eaf8"/><rect x="6" y="11.400" width="3.800" height="3.400" fill="#a66bbe"/></svg>
<div class="gc" style="left:1336px;top:234px;width:74px;background:#f0f0f0"></div><div class="cb" style="left:1366px;top:238px;width:12px;height:12px"></div><svg class="a" style="left:1368px;top:240px" width="9" height="9" viewBox="0 0 9 9"><path d="M0.800 4.200l2.700 3l4.700-6" fill="none" stroke="#000" stroke-width="2"/></svg>
<div class="gc " style="left:1410px;top:234px;width:137px;background:#f0f0f0;letter-spacing:-0.36px;">2191000000049578871</div>
<div class="gc" style="left:1547px;top:234px;width:35px;background:#f0f0f0"></div><div class="cb" style="left:1557px;top:238px;width:12px;height:12px"></div>
<div class="gc " style="left:1582px;top:234px;width:106px;background:#f0f0f0;letter-spacing:-0.36px;">Neto po času</div>
<div class="gc r" style="left:1688px;top:234px;width:75px;background:#f0f0f0;letter-spacing:-0.36px;">25.000,00</div>
<div class="gc " style="left:1763px;top:234px;width:136px;background:#f0f0f0;letter-spacing:-0.65px;border-right:none;">Iznos u dinarima sa parama</div>
<div class="gc r" style="left:234px;top:255px;width:39px;background:#fff;border-bottom:none;letter-spacing:-0.36px;">2024</div>
<div class="gc r" style="left:273px;top:255px;width:34px;background:#e2e2e2;border-bottom:none;letter-spacing:-0.36px;">04</div>
<div class="gc r" style="left:307px;top:255px;width:37px;background:#e2e2e2;border-bottom:none;letter-spacing:-0.36px;">1</div>
<div class="gc " style="left:344px;top:255px;width:196px;background:#e2e2e2;border-bottom:none;letter-spacing:-0.25px;">APRIL RAD</div>
<div class="gc r" style="left:540px;top:255px;width:53px;background:#e2e2e2;border-bottom:none;letter-spacing:-0.36px;">176,00</div>
<div class="gc r" style="left:593px;top:255px;width:69px;background:#e2e2e2;border-bottom:none;letter-spacing:-0.36px;">30.240,000</div>
<div class="gc r" style="left:662px;top:255px;width:73px;background:#e2e2e2;border-bottom:none;letter-spacing:-0.36px;">171,81818</div>
<div class="gc " style="left:735px;top:255px;width:66px;background:#e2e2e2;border-bottom:none;letter-spacing:-0.36px;">12.04.24</div>
<div class="gc r" style="left:801px;top:255px;width:75px;background:#e2e2e2;border-bottom:none;letter-spacing:-0.36px;">64.473,61</div>
<div class="gc r" style="left:876px;top:255px;width:86px;background:#e2e2e2;border-bottom:none;letter-spacing:-0.36px;">40.143,00</div>
<div class="gc r" style="left:962px;top:255px;width:76px;background:#e2e2e2;border-bottom:none;letter-spacing:-0.36px;">573.470,00</div>
<div class="gc r" style="left:1038px;top:255px;width:80px;background:#e2e2e2;border-bottom:none;letter-spacing:-0.36px;">8.101,00</div>
<div class="gc r" style="left:1118px;top:255px;width:83px;background:#e2e2e2;border-bottom:none;letter-spacing:-0.36px;">8.101,00</div>
<div class="gc" style="left:1201px;top:255px;width:41px;background:#e2e2e2;border-bottom:none"></div><div class="cb" style="left:1215px;top:259px;width:12px;height:12px"></div>
<div class="gc" style="left:1242px;top:255px;width:94px;background:#e2e2e2;border-bottom:none;padding-left:25px;letter-spacing:-0.72px">Arhiviran</div><svg class="a" style="left:1246px;top:257px" width="16" height="16" viewBox="0 0 16 16"><rect x="0" y="0" width="16" height="16" rx="1.600" fill="#a66bbe"/><rect x="3.600" y="1" width="8.600" height="6" fill="#f3eaf8"/><path d="M5 3h6M5 5h6" stroke="#cdbbd8" stroke-width=".9"/><rect x="2.800" y="10.200" width="10.200" height="4.600" fill="#f3eaf8"/><rect x="6" y="11.400" width="3.800" height="3.400" fill="#a66bbe"/></svg>
<div class="gc" style="left:1336px;top:255px;width:74px;background:#e2e2e2;border-bottom:none"></div><div class="cb" style="left:1366px;top:259px;width:12px;height:12px"></div><svg class="a" style="left:1368px;top:261px" width="9" height="9" viewBox="0 0 9 9"><path d="M0.800 4.200l2.700 3l4.700-6" fill="none" stroke="#000" stroke-width="2"/></svg>
<div class="gc " style="left:1410px;top:255px;width:137px;background:#e2e2e2;border-bottom:none;letter-spacing:-0.36px;">2191000000049578871</div>
<div class="gc" style="left:1547px;top:255px;width:35px;background:#e2e2e2;border-bottom:none"></div><div class="cb" style="left:1557px;top:259px;width:12px;height:12px"></div>
<div class="gc " style="left:1582px;top:255px;width:106px;background:#e2e2e2;border-bottom:none;letter-spacing:-0.36px;">Neto po času</div>
<div class="gc r" style="left:1688px;top:255px;width:75px;background:#e2e2e2;border-bottom:none;letter-spacing:-0.36px;">25.000,00</div>
<div class="gc " style="left:1763px;top:255px;width:136px;background:#e2e2e2;border-bottom:none;letter-spacing:-0.65px;border-right:none;">Iznos u dinarima sa parama</div>
<div class="a" style="left:1899px;top:128px;width:18px;height:148px;background:#f0f0f0"></div>
<svg class="a" style="left:1902px;top:134px" width="10" height="7" viewBox="0 0 10 7"><path d="M1.500 6l3.500-3.500l3.500 3.500" fill="none" stroke="#5a5a5a" stroke-width="2"/></svg>
<svg class="a" style="left:1903px;top:262px" width="10" height="7" viewBox="0 0 10 7"><path d="M1.500 1.500l3.500 3.500l3.500-3.500" fill="none" stroke="#555" stroke-width="2"/></svg>
<div class="a" style="left:1900px;top:237px;width:16px;height:18px;background:#cdcdcd"></div>
<div class="a" style="left:234px;top:276px;width:1683px;height:20px;background:#f0f0f0"></div>
<div class="a" style="left:234px;top:276px;width:17px;height:19px;background:#e0e0e0"></div><svg class="a" style="left:234px;top:276px" width="17" height="19" viewBox="0 0 17 19"><path d="M3.500 6v7" stroke="#111" stroke-width="1.600"/><path d="M9 6l-4 3.500l4 3.500zM13.500 6l-4 3.500l4 3.500z" fill="#111"/></svg>
<div class="a" style="left:253px;top:276px;width:17px;height:19px;background:#e0e0e0"></div><svg class="a" style="left:253px;top:276px" width="17" height="19" viewBox="0 0 17 19"><path d="M8.500 6l-4 3.500l4 3.500zM13.500 6l-4 3.500l4 3.500z" fill="#111"/></svg>
<div class="a" style="left:272px;top:276px;width:17px;height:19px;background:#e0e0e0"></div><svg class="a" style="left:272px;top:276px" width="17" height="19" viewBox="0 0 17 19"><path d="M10.500 6l-4 3.500l4 3.500z" fill="#111"/></svg>
<div class="a" style="left:289px;top:276px;width:66px;height:19px;background:#fff"></div><div class="t" style="left:297px;top:278px;font-size:13px;letter-spacing:0">75 od 75</div>
<div class="a" style="left:355px;top:276px;width:17px;height:19px;background:#ebebeb"></div><svg class="a" style="left:355px;top:276px" width="17" height="19" viewBox="0 0 17 19"><path d="M6.500 6l4 3.500l-4 3.500z" fill="#8c8c8c"/></svg>
<div class="a" style="left:374px;top:276px;width:17px;height:19px;background:#ebebeb"></div><svg class="a" style="left:374px;top:276px" width="17" height="19" viewBox="0 0 17 19"><path d="M4 6l4 3.500l-4 3.500zM9 6l4 3.500l-4 3.500z" fill="#8c8c8c"/></svg>
<div class="a" style="left:393px;top:276px;width:17px;height:19px;background:#ebebeb"></div><svg class="a" style="left:393px;top:276px" width="17" height="19" viewBox="0 0 17 19"><path d="M3.500 6l4 3.500l-4 3.500zM8 6l4 3.500l-4 3.500z" fill="#8c8c8c"/><path d="M13.500 6v7" stroke="#8c8c8c" stroke-width="1.600"/></svg>
<div class="a" style="left:412px;top:276px;width:17px;height:19px;background:#ebebeb"></div><svg class="a" style="left:412px;top:276px" width="17" height="19" viewBox="0 0 17 19"><path d="M3.500 9.500h10M8.500 4.500v10" stroke="#8c8c8c" stroke-width="2"/></svg>
<div class="a" style="left:431px;top:276px;width:17px;height:19px;background:#ebebeb"></div><svg class="a" style="left:431px;top:276px" width="17" height="19" viewBox="0 0 17 19"><path d="M3.500 9.500h10" stroke="#8c8c8c" stroke-width="2"/></svg>
<div class="a" style="left:450px;top:276px;width:17px;height:19px;background:#ebebeb"></div><svg class="a" style="left:450px;top:276px" width="17" height="19" viewBox="0 0 17 19"><path d="M5.500 11.500l3-4l3 4z" fill="#8c8c8c"/></svg>
<div class="a" style="left:469px;top:276px;width:17px;height:19px;background:#ebebeb"></div><svg class="a" style="left:469px;top:276px" width="17" height="19" viewBox="0 0 17 19"><path d="M3.500 10l3.500 3.500l6.500-8" fill="none" stroke="#aaa" stroke-width="1.800"/></svg>
<div class="a" style="left:488px;top:276px;width:17px;height:19px;background:#ebebeb"></div><svg class="a" style="left:488px;top:276px" width="17" height="19" viewBox="0 0 17 19"><path d="M5 6l7 7M12 6l-7 7" stroke="#8c8c8c" stroke-width="1.700"/></svg>
<div class="a" style="left:507px;top:276px;width:17px;height:19px;background:#e0e0e0"></div><svg class="a" style="left:507px;top:276px" width="17" height="19" viewBox="0 0 17 19"><path d="M3.500 14.500c0-4.500 2.500-6 7.500-6" fill="none" stroke="#111" stroke-width="2.200"/><path d="M10 4.500l5.500 4l-5.500 4z" fill="#111"/></svg>
<div class="a" style="left:526px;top:276px;width:17px;height:19px;background:#e0e0e0"></div><svg class="a" style="left:526px;top:276px" width="17" height="19" viewBox="0 0 17 19"><g stroke="#111" stroke-width="2"><path d="M8.500 4v11M3.500 9.500h10M4.800 5.800l7.400 7.400M12.200 5.800l-7.400 7.400"/></g></svg>
<div class="a" style="left:545px;top:276px;width:17px;height:19px;background:#ebebeb"></div><svg class="a" style="left:545px;top:276px" width="17" height="19" viewBox="0 0 17 19"><g stroke="#555" stroke-width="1.300"><path d="M9 5v9M4.500 9.500h9M5.800 6.300l6.400 6.400M12.200 6.300l-6.400 6.400"/></g><path d="M2.500 4l1.500 1.500" stroke="#555"/></svg>
<div class="a" style="left:564px;top:276px;width:17px;height:19px;background:#e6e6e6"></div><svg class="a" style="left:564px;top:276px" width="17" height="19" viewBox="0 0 17 19"><path d="M2.500 4h12l-4.500 5.500v5.500l-3-1.500v-4z" fill="#f5821f"/></svg>
<svg class="a" style="left:643px;top:281px" width="7" height="10" viewBox="0 0 7 10"><path d="M5 1.500l-3.500 3.500l3.500 3.500" fill="none" stroke="#555" stroke-width="2"/></svg>
<svg class="a" style="left:1886px;top:281px" width="7" height="10" viewBox="0 0 7 10"><path d="M2 1.500l3.500 3.500l-3.500 3.500" fill="none" stroke="#555" stroke-width="2"/></svg>
<div class="a" style="left:656px;top:277px;width:904px;height:17px;background:#cdcdcd"></div>
<div class="pnl" style="left:233px;top:298px;width:79px;height:32px"></div><div class="btn" style="left:236px;top:300px;width:74px;height:27px;line-height:26px;font-size:14.500px">F6 - Novi</div>
<div class="pnl" style="left:313px;top:298px;width:108px;height:32px"></div><div class="cb" style="left:318px;top:307px;width:13px;height:13px"></div><div class="t" style="left:337px;top:306px;letter-spacing:-0.3px">F2 - IZMENE</div>
<div class="pnl" style="left:423px;top:298px;width:159px;height:32px"></div><div class="cb" style="left:428px;top:307px;width:13px;height:13px"></div><div class="t" style="left:447px;top:306px;letter-spacing:0">Interaktivno knjiženje</div>
<div class="pnl" style="left:584px;top:298px;width:877px;height:32px"></div>
<div class="pnl" style="left:1463px;top:298px;width:133px;height:32px"></div>
<div class="pnl" style="left:1598px;top:298px;width:92px;height:32px"></div><div class="btn" style="left:1600px;top:300px;width:88px;height:27px;line-height:26px;letter-spacing:-0.3px">OK / Primeni</div>
<div class="pnl" style="left:1690px;top:298px;width:103px;height:32px"></div><div class="btn" style="left:1692px;top:300px;width:99px;height:27px;line-height:26px;letter-spacing:-0.3px">Prikaži arhivu</div>
<div class="pnl" style="left:1793px;top:298px;width:123px;height:32px"></div><div class="btn" style="left:1795px;top:300px;width:119px;height:27px;line-height:26px;letter-spacing:-0.05px">VRATI IZ ARHIVE</div>
<svg class="a" style="left:233px;top:331px" width="101" height="23" viewBox="0 0 101 23"><path d="M0.500 23V6.500L6.500 0.500H100.5V23" fill="#f0f0f0" stroke="#a3a3a3"/></svg>
<div class="t" style="left:240px;top:336px;width:93px;overflow:hidden;letter-spacing:-0.2px;color:#000">Obračun zarada</div>
<svg class="a" style="left:335px;top:331px" width="174" height="23" viewBox="0 0 174 23"><path d="M0.500 23V6.500L6.500 0.500H173.5V23" fill="#f0f0f0" stroke="#a3a3a3"/></svg>
<div class="t" style="left:342px;top:336px;width:166px;overflow:hidden;letter-spacing:-0.2px;color:#000">Standardni nalog za obračun</div>
<svg class="a" style="left:511px;top:331px" width="165" height="23" viewBox="0 0 165 23"><path d="M0.500 23V6.500L6.500 0.500H164.5V23" fill="#f0f0f0" stroke="#a3a3a3"/></svg>
<div class="t" style="left:518px;top:336px;width:157px;overflow:hidden;letter-spacing:-0.2px;color:#000">Evidencija radnog vremena</div>
<svg class="a" style="left:677px;top:331px" width="112" height="23" viewBox="0 0 112 23"><path d="M0.500 23V6.500L6.500 0.500H111.5V23" fill="#f0f0f0" stroke="#a3a3a3"/></svg>
<div class="t" style="left:684px;top:336px;width:104px;overflow:hidden;letter-spacing:-0.2px;color:#000">Pregled obračuna</div>
<svg class="a" style="left:790px;top:331px" width="171" height="23" viewBox="0 0 171 23"><path d="M0.500 23V6.500L6.500 0.500H170.5V23" fill="#f3f3f3" stroke="#a3a3a3"/><path d="M5 2H171" stroke="#2b579a" stroke-width="3"/><path d="M1 7L6.500 1.200" stroke="#2b579a" stroke-width="1.500"/></svg>
<div class="t" style="left:797px;top:336px;width:163px;overflow:hidden;letter-spacing:0px;color:#000">Obrasci / Virmani / Izveštaji</div>
<svg class="a" style="left:963px;top:331px" width="62" height="23" viewBox="0 0 62 23"><path d="M0.500 23V6.500L6.500 0.500H61.5V23" fill="#f0f0f0" stroke="#a3a3a3"/></svg>
<div class="t" style="left:970px;top:336px;width:54px;overflow:hidden;letter-spacing:-0.2px;color:#000">Knjiženja</div>
<svg class="a" style="left:1027px;top:331px" width="61" height="23" viewBox="0 0 61 23"><path d="M0.500 23V6.500L6.500 0.500H60.5V23" fill="#f0f0f0" stroke="#a3a3a3"/></svg>
<div class="t" style="left:1034px;top:336px;width:53px;overflow:hidden;letter-spacing:-0.2px;color:#000">Događaji</div>
<svg class="a" style="left:1090px;top:331px" width="83" height="23" viewBox="0 0 83 23"><path d="M0.500 23V6.500L6.500 0.500H82.5V23" fill="#f0f0f0" stroke="#a3a3a3"/></svg>
<div class="t" style="left:1097px;top:336px;width:75px;overflow:hidden;letter-spacing:-0.2px;color:#000">Polja po želji</div>
<svg class="a" style="left:1175px;top:331px" width="104" height="23" viewBox="0 0 104 23"><path d="M0.500 23V6.500L6.500 0.500H103.5V23" fill="#f0f0f0" stroke="#a3a3a3"/></svg>
<div class="t" style="left:1182px;top:336px;width:96px;overflow:hidden;letter-spacing:-0.2px;color:#000">Vezni dokumenti</div>
<svg class="a" style="left:1281px;top:331px" width="80" height="23" viewBox="0 0 80 23"><path d="M0.500 23V6.500L6.500 0.500H79.5V23" fill="#f0f0f0" stroke="#a3a3a3"/></svg>
<div class="t" style="left:1288px;top:336px;width:72px;overflow:hidden;letter-spacing:-0.2px;color:#000">Obaveštenja</div>
<div class="a" style="left:233px;top:353px;width:557px;height:1px;background:#a3a3a3"></div><div class="a" style="left:960px;top:353px;width:959px;height:1px;background:#a3a3a3"></div>
<svg class="a" style="left:233px;top:355px" width="215" height="23" viewBox="0 0 215 23"><path d="M0.500 23V6.500L6.500 0.500H214.5V23" fill="#f0f0f0" stroke="#a3a3a3"/></svg>
<div class="t" style="left:240px;top:360px;width:207px;overflow:hidden;letter-spacing:-0.2px;color:#000">Specifikacija obračuna po radnicima</div>
<svg class="a" style="left:450px;top:355px" width="103" height="23" viewBox="0 0 103 23"><path d="M0.500 23V6.500L6.500 0.500H102.5V23" fill="#f0f0f0" stroke="#a3a3a3"/></svg>
<div class="t" style="left:457px;top:360px;width:95px;overflow:hidden;letter-spacing:-0.2px;color:#000">Obrazac PPP-PD</div>
<svg class="a" style="left:554px;top:355px" width="103" height="23" viewBox="0 0 103 23"><path d="M0.500 23V6.500L6.500 0.500H102.5V23" fill="#f0f0f0" stroke="#a3a3a3"/></svg>
<div class="t" style="left:561px;top:360px;width:95px;overflow:hidden;letter-spacing:-0.2px;color:#000">Obrada virmana</div>
<svg class="a" style="left:658px;top:355px" width="160" height="23" viewBox="0 0 160 23"><path d="M0.500 23V6.500L6.500 0.500H159.5V23" fill="#f3f3f3" stroke="#a3a3a3"/><path d="M5 2H160" stroke="#2b579a" stroke-width="3"/><path d="M1 7L6.500 1.200" stroke="#2b579a" stroke-width="1.500"/></svg>
<div class="t" style="left:665px;top:360px;width:152px;overflow:hidden;letter-spacing:-0.2px;color:#000">Ostali izveštaji za obračun</div>
<div class="a" style="left:233px;top:377px;width:425px;height:1px;background:#b8b8b8"></div><div class="a" style="left:817px;top:377px;width:1102px;height:1px;background:#b8b8b8"></div>
<svg class="a" style="left:547px;top:379px" width="106" height="22" viewBox="0 0 106 22"><path d="M0.500 22V6.500L6.500 0.500H105.5V22" fill="#f3f3f3" stroke="#a3a3a3"/><path d="M5 2H106" stroke="#2b579a" stroke-width="3"/><path d="M1 7L6.500 1.200" stroke="#2b579a" stroke-width="1.500"/></svg>
<div class="t" style="left:554px;top:384px;width:98px;overflow:hidden;letter-spacing:-0.2px;color:#b8b8b8">Zaposleni radnici</div>
<svg class="a" style="left:655px;top:379px" width="98" height="22" viewBox="0 0 98 22"><path d="M0.500 22V6.500L6.500 0.500H97.5V22" fill="#f0f0f0" stroke="#a3a3a3"/></svg>
<div class="t" style="left:662px;top:384px;width:90px;overflow:hidden;letter-spacing:-0.2px;color:#b8b8b8">Poslovni objekti</div>
<svg class="a" style="left:755px;top:379px" width="65" height="22" viewBox="0 0 65 22"><path d="M0.500 22V6.500L6.500 0.500H64.5V22" fill="#f0f0f0" stroke="#a3a3a3"/></svg>
<div class="t" style="left:762px;top:384px;width:57px;overflow:hidden;letter-spacing:-0.2px;color:#b8b8b8">Odeljenja</div>
<svg class="a" style="left:822px;top:379px" width="58" height="22" viewBox="0 0 58 22"><path d="M0.500 22V6.500L6.500 0.500H57.5V22" fill="#f0f0f0" stroke="#a3a3a3"/></svg>
<div class="t" style="left:829px;top:384px;width:50px;overflow:hidden;letter-spacing:-0.2px;color:#b8b8b8">Kreditori</div>
<svg class="a" style="left:882px;top:379px" width="82" height="22" viewBox="0 0 82 22"><path d="M0.500 22V6.500L6.500 0.500H81.5V22" fill="#f0f0f0" stroke="#a3a3a3"/></svg>
<div class="t" style="left:889px;top:384px;width:74px;overflow:hidden;letter-spacing:-0.2px;color:#b8b8b8">Vrste zarada</div>
<div class="a" style="left:235px;top:388px;width:307px;height:127px;border:1px solid #d0d0d0;box-shadow:1px 1px 0 #fff"></div>
<div class="t" style="left:241px;top:381px;background:#f0f0f0;padding:0 2px;letter-spacing:-0.2px">Kriterijumi</div>
<div class="cb" style="left:247px;top:400px;width:12px;height:12px"></div><div class="t" style="left:266px;top:398px;letter-spacing:-0.3px">Za zaposlenog</div>
<div class="cb" style="left:247px;top:423px;width:12px;height:12px"></div><div class="t" style="left:266px;top:421px;letter-spacing:-0.3px">Za objekat</div>
<div class="cb" style="left:247px;top:447px;width:12px;height:12px"></div><div class="t" style="left:266px;top:445px;letter-spacing:-0.3px">Za odeljenje</div>
<div class="cb" style="left:247px;top:470px;width:12px;height:12px"></div><div class="t" style="left:266px;top:468px;letter-spacing:-0.3px">Za kreditora</div>
<div class="cb" style="left:247px;top:494px;width:12px;height:12px"></div><div class="t" style="left:266px;top:492px;letter-spacing:-0.3px">Za vrstu zarade</div>
<div class="t" style="left:403px;top:394px;letter-spacing:-0.2px">Način sortiranja</div>
<div class="a" style="left:404px;top:420px;width:12px;height:12px;border-radius:6px;border:1px solid #8a8a8a;background:#fff"></div><div class="a" style="left:407px;top:423px;width:6px;height:6px;border-radius:3px;background:#000"></div><div class="t" style="left:422px;top:417px;letter-spacing:0">Po šifri</div>
<div class="a" style="left:404px;top:444px;width:12px;height:12px;border-radius:6px;border:1px solid #8a8a8a;background:#fff"></div><div class="t" style="left:422px;top:441px;letter-spacing:0">Po nazivu</div>
<div class="a" style="left:235px;top:518px;width:307px;height:486px;background:#fff;border:1px solid #a8a8a8"></div>
<div class="a" style="left:249px;top:528px;width:0;height:378px;border-left:1px dotted #9a9a9a"></div>
<div class="a" style="left:249px;top:527px;width:11px;height:0;border-top:1px dotted #9a9a9a"></div><div class="tree2" style="top:518px">Spisak za unos sati</div>
<div class="a" style="left:249px;top:545px;width:11px;height:0;border-top:1px dotted #9a9a9a"></div><div class="tree2" style="top:536px">Spisak zaposlenih bez obračuna</div>
<div class="a" style="left:249px;top:563px;width:11px;height:0;border-top:1px dotted #9a9a9a"></div><div class="tree2" style="top:554px">Kontrolna lista obračuna</div>
<div class="a" style="left:249px;top:581px;width:11px;height:0;border-top:1px dotted #9a9a9a"></div><div class="tree2" style="top:572px">Rekapitulacija obračuna</div>
<div class="a" style="left:249px;top:599px;width:11px;height:0;border-top:1px dotted #9a9a9a"></div><div class="tree2" style="top:590px">Rekapitulacija po vrstama zarada</div>
<div class="a" style="left:249px;top:617px;width:11px;height:0;border-top:1px dotted #9a9a9a"></div><div class="tree2" style="top:608px">Kumul.rekapit.po vrstama zarada</div>
<div class="a" style="left:249px;top:635px;width:11px;height:0;border-top:1px dotted #9a9a9a"></div><div class="tree2" style="top:626px">Spisak NETO zarada</div>
<div class="a" style="left:249px;top:653px;width:11px;height:0;border-top:1px dotted #9a9a9a"></div><div class="tree2" style="top:644px">Spisak zarada zaposlenih sa rekapitulacijom</div>
<div class="a" style="left:249px;top:671px;width:11px;height:0;border-top:1px dotted #9a9a9a"></div><div class="tree2" style="top:662px">Kumulativna rekapitulacija</div>
<div class="a" style="left:249px;top:689px;width:11px;height:0;border-top:1px dotted #9a9a9a"></div><div class="tree2" style="top:680px">Kontrolna lista za poreze i doprinose</div>
<div class="a" style="left:249px;top:707px;width:11px;height:0;border-top:1px dotted #9a9a9a"></div><div class="tree2" style="top:698px">Obračun NETO iznosa za isplatu</div>
<div class="a" style="left:249px;top:725px;width:11px;height:0;border-top:1px dotted #9a9a9a"></div><div class="tree2" style="top:716px">Kontrolna lista obračuna poreza</div>
<div class="a" style="left:249px;top:743px;width:11px;height:0;border-top:1px dotted #9a9a9a"></div><div class="tree2" style="top:734px">Specifikacija za tek.rn. - po bankama</div>
<div class="a" style="left:249px;top:761px;width:11px;height:0;border-top:1px dotted #9a9a9a"></div><div class="tree2" style="top:752px">Specifikacija za blagajnu</div>
<div class="a" style="left:249px;top:779px;width:11px;height:0;border-top:1px dotted #9a9a9a"></div><div class="tree2" style="top:770px">Specifikacija za obustave na primanja</div>
<div class="a" style="left:249px;top:797px;width:11px;height:0;border-top:1px dotted #9a9a9a"></div><div class="tree2" style="top:788px">Specifkacija za otplatu kredita</div>
<div class="a" style="left:249px;top:815px;width:11px;height:0;border-top:1px dotted #9a9a9a"></div><div class="tree2" style="top:806px">Specifikacija uz virman za upl.dopr.</div>
<div class="a" style="left:249px;top:833px;width:11px;height:0;border-top:1px dotted #9a9a9a"></div><div class="tree2" style="top:824px">Obrazac NZ-1</div>
<div class="a" style="left:249px;top:851px;width:11px;height:0;border-top:1px dotted #9a9a9a"></div><div class="tree2" style="top:842px">Evidencija zarade po čl.122 Zakona</div>
<div class="a" style="left:249px;top:869px;width:11px;height:0;border-top:1px dotted #9a9a9a"></div><div class="tree2" style="top:860px">Platni spisak pre umanjenja - Obrazac PS02</div>
<div class="a" style="left:249px;top:887px;width:11px;height:0;border-top:1px dotted #9a9a9a"></div><div class="tree2" style="top:878px">Pregled časova obračuna</div>
<div class="a" style="left:249px;top:905px;width:11px;height:0;border-top:1px dotted #9a9a9a"></div><div class="tree2" style="top:896px">Ugovoreni i isplaćeni iznosi zarade</div>
<div class="a" style="left:544px;top:400px;width:1375px;height:1px;background:#c8c8c8"></div>
<div class="inp" style="left:1070px;top:406px;width:843px;height:26px;border-color:#ababab #d9d9d9 #d9d9d9 #ababab"></div>
<div class="a" style="left:547px;top:436px;width:1370px;height:539px;background:#fff;border:1px solid #2b579a"></div>
<div class="a" style="left:548px;top:437px;width:578px;height:22px;background:#f0f0f0;border-bottom:1px solid #6f93c9"></div>
<div class="a" style="left:1089px;top:439px;width:1px;height:17px;background:#8aa4d0"></div><div class="a" style="left:1125px;top:437px;width:1px;height:21px;background:#8aa4d0"></div><div class="t" style="left:1093px;top:441px">Izbor</div>
<div class="gc r" style="left:548px;top:459px;width:52px;height:19px;line-height:20px;background:#e4e4e4">1</div>
<div class="gc" style="left:600px;top:459px;width:355px;height:19px;line-height:20px;background:#e4e4e4"></div>
<div class="gc" style="left:955px;top:459px;width:135px;height:19px;line-height:20px;background:#e4e4e4"></div>
<div class="gc" style="left:1090px;top:459px;width:36px;height:19px;background:#e4e4e4"></div><div class="cb" style="left:1101px;top:462px;width:12px;height:12px"></div>
<div class="gc r" style="left:548px;top:478px;width:52px;height:19px;line-height:20px;background:#f0f0f0">2</div>
<div class="gc" style="left:600px;top:478px;width:355px;height:19px;line-height:20px;background:#f0f0f0"></div>
<div class="gc" style="left:955px;top:478px;width:135px;height:19px;line-height:20px;background:#f0f0f0"></div>
<div class="gc" style="left:1090px;top:478px;width:36px;height:19px;background:#f0f0f0"></div><div class="cb" style="left:1101px;top:481px;width:12px;height:12px"></div>
<div class="gc r" style="left:548px;top:497px;width:52px;height:19px;line-height:20px;background:#fff">3</div>
<div class="gc" style="left:600px;top:497px;width:355px;height:19px;line-height:20px;background:#fff"></div>
<div class="gc" style="left:955px;top:497px;width:135px;height:19px;line-height:20px;background:#fff"></div>
<div class="gc" style="left:1090px;top:497px;width:36px;height:19px;background:#fff"></div><div class="cb" style="left:1101px;top:500px;width:12px;height:12px"></div>
<div class="gc r" style="left:548px;top:516px;width:52px;height:19px;line-height:20px;background:#f0f0f0">4</div>
<div class="gc" style="left:600px;top:516px;width:355px;height:19px;line-height:20px;background:#f0f0f0"></div>
<div class="gc" style="left:955px;top:516px;width:135px;height:19px;line-height:20px;background:#f0f0f0"></div>
<div class="gc" style="left:1090px;top:516px;width:36px;height:19px;background:#f0f0f0"></div><div class="cb" style="left:1101px;top:519px;width:12px;height:12px"></div>
<div class="gc r" style="left:548px;top:535px;width:52px;height:19px;line-height:20px;background:#fff">5</div>
<div class="gc" style="left:600px;top:535px;width:355px;height:19px;line-height:20px;background:#fff"></div>
<div class="gc" style="left:955px;top:535px;width:135px;height:19px;line-height:20px;background:#fff"></div>
<div class="gc" style="left:1090px;top:535px;width:36px;height:19px;background:#fff"></div><div class="cb" style="left:1101px;top:538px;width:12px;height:12px"></div>
<div class="gc r" style="left:548px;top:554px;width:52px;height:19px;line-height:20px;background:#f0f0f0">6</div>
<div class="gc" style="left:600px;top:554px;width:355px;height:19px;line-height:20px;background:#f0f0f0"></div>
<div class="gc" style="left:955px;top:554px;width:135px;height:19px;line-height:20px;background:#f0f0f0"></div>
<div class="gc" style="left:1090px;top:554px;width:36px;height:19px;background:#f0f0f0"></div><div class="cb" style="left:1101px;top:557px;width:12px;height:12px"></div>
<div class="gc r" style="left:548px;top:573px;width:52px;height:19px;line-height:20px;background:#fff">7</div>
<div class="gc" style="left:600px;top:573px;width:355px;height:19px;line-height:20px;background:#fff"></div>
<div class="gc" style="left:955px;top:573px;width:135px;height:19px;line-height:20px;background:#fff"></div>
<div class="gc" style="left:1090px;top:573px;width:36px;height:19px;background:#fff"></div><div class="cb" style="left:1101px;top:576px;width:12px;height:12px"></div>
<div class="gc r" style="left:548px;top:592px;width:52px;height:19px;line-height:20px;background:#f0f0f0">8</div>
<div class="gc" style="left:600px;top:592px;width:355px;height:19px;line-height:20px;background:#f0f0f0">KOSTIĆ ANDRIJA</div>
<div class="gc" style="left:955px;top:592px;width:135px;height:19px;line-height:20px;background:#f0f0f0"></div>
<div class="gc" style="left:1090px;top:592px;width:36px;height:19px;background:#f0f0f0"></div><div class="cb" style="left:1101px;top:595px;width:12px;height:12px"></div>
<div class="gc r" style="left:548px;top:611px;width:52px;height:19px;line-height:20px;background:#fff">9</div>
<div class="gc" style="left:600px;top:611px;width:355px;height:19px;line-height:20px;background:#fff">PRODANOVIĆ DRAGAN</div>
<div class="gc" style="left:955px;top:611px;width:135px;height:19px;line-height:20px;background:#fff"></div>
<div class="gc" style="left:1090px;top:611px;width:36px;height:19px;background:#fff"></div><div class="cb" style="left:1101px;top:614px;width:12px;height:12px"></div>
<div class="gc r" style="left:548px;top:630px;width:52px;height:19px;line-height:20px;background:#f0f0f0">10</div>
<div class="gc" style="left:600px;top:630px;width:355px;height:19px;line-height:20px;background:#f0f0f0">ALEKSIĆ IVAN</div>
<div class="gc" style="left:955px;top:630px;width:135px;height:19px;line-height:20px;background:#f0f0f0"></div>
<div class="gc" style="left:1090px;top:630px;width:36px;height:19px;background:#f0f0f0"></div><div class="cb" style="left:1101px;top:633px;width:12px;height:12px"></div>
<div class="gc r" style="left:548px;top:649px;width:52px;height:19px;line-height:20px;background:#fff">11</div>
<div class="gc" style="left:600px;top:649px;width:355px;height:19px;line-height:20px;background:#fff">STOJKOVIĆ MARIJA</div>
<div class="gc" style="left:955px;top:649px;width:135px;height:19px;line-height:20px;background:#fff"></div>
<div class="gc" style="left:1090px;top:649px;width:36px;height:19px;background:#fff"></div><div class="cb" style="left:1101px;top:652px;width:12px;height:12px"></div>
<div class="gc r" style="left:548px;top:668px;width:52px;height:19px;line-height:20px;background:#f0f0f0">12</div>
<div class="gc" style="left:600px;top:668px;width:355px;height:19px;line-height:20px;background:#f0f0f0">PETKOVIĆ&nbsp; IVANA</div>
<div class="gc" style="left:955px;top:668px;width:135px;height:19px;line-height:20px;background:#f0f0f0"></div>
<div class="gc" style="left:1090px;top:668px;width:36px;height:19px;background:#f0f0f0"></div><div class="cb" style="left:1101px;top:671px;width:12px;height:12px"></div>
<div class="gc r" style="left:548px;top:687px;width:52px;height:19px;line-height:20px;background:#fff">13</div>
<div class="gc" style="left:600px;top:687px;width:355px;height:19px;line-height:20px;background:#fff"></div>
<div class="gc" style="left:955px;top:687px;width:135px;height:19px;line-height:20px;background:#fff"></div>
<div class="gc" style="left:1090px;top:687px;width:36px;height:19px;background:#fff"></div><div class="cb" style="left:1101px;top:690px;width:12px;height:12px"></div>
<div class="gc r" style="left:548px;top:706px;width:52px;height:19px;line-height:20px;background:#f0f0f0">14</div>
<div class="gc" style="left:600px;top:706px;width:355px;height:19px;line-height:20px;background:#f0f0f0"></div>
<div class="gc" style="left:955px;top:706px;width:135px;height:19px;line-height:20px;background:#f0f0f0"></div>
<div class="gc" style="left:1090px;top:706px;width:36px;height:19px;background:#f0f0f0"></div><div class="cb" style="left:1101px;top:709px;width:12px;height:12px"></div>
<div class="gc r" style="left:548px;top:725px;width:52px;height:19px;line-height:20px;background:#fff">15</div>
<div class="gc" style="left:600px;top:725px;width:355px;height:19px;line-height:20px;background:#fff"></div>
<div class="gc" style="left:955px;top:725px;width:135px;height:19px;line-height:20px;background:#fff"></div>
<div class="gc" style="left:1090px;top:725px;width:36px;height:19px;background:#fff"></div><div class="cb" style="left:1101px;top:728px;width:12px;height:12px"></div>
<div class="gc r" style="left:548px;top:744px;width:52px;height:19px;line-height:20px;background:#f0f0f0">16</div>
<div class="gc" style="left:600px;top:744px;width:355px;height:19px;line-height:20px;background:#f0f0f0"></div>
<div class="gc" style="left:955px;top:744px;width:135px;height:19px;line-height:20px;background:#f0f0f0"></div>
<div class="gc" style="left:1090px;top:744px;width:36px;height:19px;background:#f0f0f0"></div><div class="cb" style="left:1101px;top:747px;width:12px;height:12px"></div>
<div class="gc r" style="left:548px;top:763px;width:52px;height:19px;line-height:20px;background:#fff">17</div>
<div class="gc" style="left:600px;top:763px;width:355px;height:19px;line-height:20px;background:#fff"></div>
<div class="gc" style="left:955px;top:763px;width:135px;height:19px;line-height:20px;background:#fff"></div>
<div class="gc" style="left:1090px;top:763px;width:36px;height:19px;background:#fff"></div><div class="cb" style="left:1101px;top:766px;width:12px;height:12px"></div>
<div class="gc r" style="left:548px;top:782px;width:52px;height:19px;line-height:20px;background:#f0f0f0">18</div>
<div class="gc" style="left:600px;top:782px;width:355px;height:19px;line-height:20px;background:#f0f0f0"></div>
<div class="gc" style="left:955px;top:782px;width:135px;height:19px;line-height:20px;background:#f0f0f0"></div>
<div class="gc" style="left:1090px;top:782px;width:36px;height:19px;background:#f0f0f0"></div><div class="cb" style="left:1101px;top:785px;width:12px;height:12px"></div>
<div class="gc r" style="left:548px;top:801px;width:52px;height:19px;line-height:20px;background:#fff">19</div>
<div class="gc" style="left:600px;top:801px;width:355px;height:19px;line-height:20px;background:#fff"></div>
<div class="gc" style="left:955px;top:801px;width:135px;height:19px;line-height:20px;background:#fff"></div>
<div class="gc" style="left:1090px;top:801px;width:36px;height:19px;background:#fff"></div><div class="cb" style="left:1101px;top:804px;width:12px;height:12px"></div>
<div class="gc r" style="left:548px;top:820px;width:52px;height:19px;line-height:20px;background:#f0f0f0">20</div>
<div class="gc" style="left:600px;top:820px;width:355px;height:19px;line-height:20px;background:#f0f0f0"></div>
<div class="gc" style="left:955px;top:820px;width:135px;height:19px;line-height:20px;background:#f0f0f0"></div>
<div class="gc" style="left:1090px;top:820px;width:36px;height:19px;background:#f0f0f0"></div><div class="cb" style="left:1101px;top:823px;width:12px;height:12px"></div>
<div class="gc r" style="left:548px;top:839px;width:52px;height:19px;line-height:20px;background:#fff">21</div>
<div class="gc" style="left:600px;top:839px;width:355px;height:19px;line-height:20px;background:#fff"></div>
<div class="gc" style="left:955px;top:839px;width:135px;height:19px;line-height:20px;background:#fff"></div>
<div class="gc" style="left:1090px;top:839px;width:36px;height:19px;background:#fff"></div><div class="cb" style="left:1101px;top:842px;width:12px;height:12px"></div>
<div class="gc r" style="left:548px;top:858px;width:52px;height:19px;line-height:20px;background:#f0f0f0">22</div>
<div class="gc" style="left:600px;top:858px;width:355px;height:19px;line-height:20px;background:#f0f0f0">SIMIĆ SNEŽANA</div>
<div class="gc" style="left:955px;top:858px;width:135px;height:19px;line-height:20px;background:#f0f0f0">3007985720043</div>
<div class="gc" style="left:1090px;top:858px;width:36px;height:19px;background:#f0f0f0"></div><div class="cb" style="left:1101px;top:861px;width:12px;height:12px"></div>
<div class="gc r" style="left:548px;top:877px;width:52px;height:19px;line-height:20px;background:#fff">23</div>
<div class="gc" style="left:600px;top:877px;width:355px;height:19px;line-height:20px;background:#fff"></div>
<div class="gc" style="left:955px;top:877px;width:135px;height:19px;line-height:20px;background:#fff"></div>
<div class="gc" style="left:1090px;top:877px;width:36px;height:19px;background:#fff"></div><div class="cb" style="left:1101px;top:880px;width:12px;height:12px"></div>
<div class="gc" style="left:1090px;top:896px;width:36px;height:19px;background:#f0f0f0"></div><div class="cb" style="left:1101px;top:899px;width:12px;height:12px"></div>
<div class="gc" style="left:1090px;top:915px;width:36px;height:19px;background:#fff"></div><div class="cb" style="left:1101px;top:918px;width:12px;height:12px"></div>
<div class="gc" style="left:1090px;top:934px;width:36px;height:19px;background:#f0f0f0"></div><div class="cb" style="left:1101px;top:937px;width:12px;height:12px"></div>
<div class="gc" style="left:1090px;top:953px;width:36px;height:19px;background:#fff"></div><div class="cb" style="left:1101px;top:956px;width:12px;height:12px"></div>
<div class="a" style="left:548px;top:882px;width:541px;height:92px;background:#fff"></div>
<div class="a" style="left:1898px;top:437px;width:18px;height:537px;background:#f0f0f0"></div>
<svg class="a" style="left:1902px;top:442px" width="10" height="7" viewBox="0 0 10 7"><path d="M1.500 5.500l3.500-3.500l3.500 3.500" fill="none" stroke="#555" stroke-width="2"/></svg>
<svg class="a" style="left:1902px;top:962px" width="10" height="7" viewBox="0 0 10 7"><path d="M1.500 1.500l3.500 3.500l3.500-3.500" fill="none" stroke="#555" stroke-width="2"/></svg>
<div class="a" style="left:1899px;top:456px;width:16px;height:27px;background:#cdcdcd"></div>
<div class="pnl" style="left:548px;top:976px;width:102px;height:30px"></div><div class="btn" style="left:550px;top:978px;width:98px;height:25px;line-height:22px">Poništi izbor</div>
<div class="pnl" style="left:651px;top:976px;width:1082px;height:30px;background:linear-gradient(#fdfdfd,#e0e0e0)"></div><div class="t" style="left:1124px;top:983px;letter-spacing:-0.05px">F7 - Pretraga po nazivu</div>
<div class="pnl" style="left:1734px;top:976px;width:90px;height:30px"></div><div class="btn" style="left:1736px;top:978px;width:86px;height:25px;line-height:23px;color:#8e8e8e;background:#cccccc;border-color:#bdbdbd;text-shadow:1px 1px 0 #f2f2f2">Odustani</div>
<div class="pnl" style="left:1825px;top:976px;width:92px;height:30px"></div><div class="btn" style="left:1827px;top:978px;width:87px;height:25px;line-height:23px;color:#8e8e8e;background:#cccccc;border-color:#bdbdbd;text-shadow:1px 1px 0 #f2f2f2">OK / Upiši</div>
<div class="a" style="left:956px;top:459px;width:131px;height:219px;background:#fff"></div>
<div class="a" style="left:446px;top:398px;width:626px;height:192px;background:#f0f0f0;box-shadow:2px 3px 10px 1px rgba(0,0,0,.45)"><div class="a blue" style="left:0;top:0;width:626px;height:30px"></div><div class="t w" style="left:0;width:624px;text-align:center;top:8px;font-size:13px;letter-spacing:0;color:#f3f6fb">IZBOR ŠIFRE BANKE / KREDITORA I SADRŽAJA SPECIFIKACIJE - Obračun 2024-4/1</div><svg class="a" style="left:603px;top:8px" width="15" height="15" viewBox="0 0 15 15"><path d="M1.700 1.700l11.600 11.600M13.300 1.700l-11.600 11.600" stroke="#fff" stroke-width="1.100"/></svg><div class="a" style="left:0;top:30px;width:626px;height:129px;border:1px solid #2b579a;background:linear-gradient(#fbfbfb,#e4e4e4)"></div><div class="t" style="left:60px;width:211px;text-align:right;top:46px;font-size:14px;letter-spacing:-0.25px">Šifra banke / kreditora:</div><div class="inp" style="left:287px;top:44px;width:94px;height:22px;border-color:#9a9a9a"></div><div class="t" style="left:289px;top:48px">105</div><div class="cb" style="left:397px;top:49px;width:13px;height:13px"></div><svg class="a" style="left:399px;top:51px" width="9" height="9" viewBox="0 0 9 9"><path d="M0.800 4.200l2.700 3l4.700-6" fill="none" stroke="#000" stroke-width="2"/></svg><div class="t" style="left:416px;top:48px;letter-spacing:-0.35px">Za sve banke</div><div class="t" style="left:187px;top:68px;letter-spacing:-0.3px">(Prazno =&gt; "SVI"; "+" =&gt; Pretraga)</div><div class="t" style="left:60px;width:176px;text-align:right;top:96px;font-size:14px;letter-spacing:-0.35px">Tip fajla za izvoz:</div><div class="t" style="left:60px;width:180px;text-align:right;top:124px;font-size:14px;letter-spacing:-0.33px">Specifikacijom obuhvatiti:</div><div class="inp" style="left:256px;top:92px;width:243px;height:22px;border-color:#c0c0c0"></div><div class="t" style="left:259px;top:95px">105 - AIK Banka</div><div class="a" style="left:479px;top:93px;width:19px;height:20px;background:#c8c8c8"></div><svg class="a" style="left:484px;top:100px" width="10" height="6"><path d="M0 0h10l-5 6z" fill="#000"/></svg><div class="inp" style="left:256px;top:120px;width:243px;height:22px;border-color:#c0c0c0"></div><div class="t" style="left:259px;top:123px">Sve uplate</div><div class="a" style="left:479px;top:121px;width:19px;height:20px;background:#e1e1e1"></div><svg class="a" style="left:484px;top:128px" width="10" height="6"><path d="M0 0h10l-5 6z" fill="#000"/></svg><div class="pnl" style="left:2px;top:161px;width:402px;height:29px"></div><div class="t" style="left:19px;top:168px;letter-spacing:0.1px">FAJLOVI SE FORMIRAJU ZA SVE RADNIKE</div><div class="pnl" style="left:405px;top:161px;width:108px;height:29px"></div><div class="btn" style="left:407px;top:163px;width:104px;height:25px;line-height:22px">F10 - Potvrdi</div><div class="pnl" style="left:514px;top:161px;width:110px;height:29px"></div><div class="btn" style="left:516px;top:163px;width:105px;height:25px;line-height:22px">Esc - Odustani</div><div class="t" style="left:113px;top:87px;font-size:27px;line-height:34px;font-weight:bold;color:#ed1c24;letter-spacing:0">1</div></div>
<div class="a" style="left:702px;top:512px;width:242px;height:130px;background:#fff;border:1px solid #000;overflow:hidden"><div class="a" style="left:0;top:0px;width:223px;height:16px;line-height:17px;padding-left:2px;letter-spacing:-0.08px;background:#0078d7;color:#fff;outline:1px dotted #f0d090;outline-offset:-1px;">105 - AIK Banka</div><div class="a" style="left:0;top:16px;width:223px;height:16px;line-height:17px;padding-left:2px;letter-spacing:-0.08px;">150 - Eurobanka</div><div class="a" style="left:0;top:32px;width:223px;height:16px;line-height:17px;padding-left:2px;letter-spacing:-0.08px;">160 - Banka Intesa - Tip 2</div><div class="a" style="left:0;top:48px;width:223px;height:16px;line-height:17px;padding-left:2px;letter-spacing:-0.08px;">160 - Banka Intesa - Tip 3</div><div class="a" style="left:0;top:64px;width:223px;height:16px;line-height:17px;padding-left:2px;letter-spacing:-0.08px;">160 - Banka Intesa - Tip 4</div><div class="a" style="left:0;top:80px;width:223px;height:16px;line-height:17px;padding-left:2px;letter-spacing:-0.08px;">165 - Addiko Banka</div><div class="a" style="left:0;top:96px;width:223px;height:16px;line-height:17px;padding-left:2px;letter-spacing:-0.08px;">200 - Poštanska štedionica</div><div class="a" style="left:0;top:112px;width:223px;height:16px;line-height:17px;padding-left:2px;letter-spacing:-0.08px;">205 - Komercijalna Banka</div><div class="a" style="left:223px;top:0;width:17px;height:128px;background:#f0f0f0"></div><svg class="a" style="left:227px;top:5px" width="9" height="6" viewBox="0 0 9 6"><path d="M1 5l3.500-3.500l3.500 3.500" fill="none" stroke="#555" stroke-width="1.800"/></svg><svg class="a" style="left:227px;top:118px" width="9" height="6" viewBox="0 0 9 6"><path d="M1 1l3.500 3.500l3.500-3.500" fill="none" stroke="#555" stroke-width="1.800"/></svg><div class="a" style="left:224px;top:21px;width:15px;height:44px;background:#cdcdcd"></div></div>
<div class="a" style="left:437px;top:391px;width:644px;height:261px;border:5px solid #ed1c24"></div>
<div class="a" style="left:440px;top:678px;width:626px;height:192px;background:#f0f0f0;box-shadow:2px 3px 10px 1px rgba(0,0,0,.45)"><div class="a blue" style="left:0;top:0;width:626px;height:30px"></div><div class="t w" style="left:0;width:624px;text-align:center;top:8px;font-size:13px;letter-spacing:0;color:#f3f6fb">IZBOR ŠIFRE BANKE / KREDITORA I SADRŽAJA SPECIFIKACIJE - Obračun 2024-4/1</div><svg class="a" style="left:603px;top:8px" width="15" height="15" viewBox="0 0 15 15"><path d="M1.700 1.700l11.600 11.600M13.300 1.700l-11.600 11.600" stroke="#fff" stroke-width="1.100"/></svg><div class="a" style="left:0;top:30px;width:626px;height:129px;border:1px solid #2b579a;background:linear-gradient(#fbfbfb,#e4e4e4)"></div><div class="t" style="left:60px;width:211px;text-align:right;top:46px;font-size:14px;letter-spacing:-0.25px">Šifra banke / kreditora:</div><div class="inp" style="left:287px;top:44px;width:94px;height:22px;border-color:#9a9a9a"></div><div class="t" style="left:289px;top:48px">105</div><div class="cb" style="left:397px;top:49px;width:13px;height:13px"></div><svg class="a" style="left:399px;top:51px" width="9" height="9" viewBox="0 0 9 9"><path d="M0.800 4.200l2.700 3l4.700-6" fill="none" stroke="#000" stroke-width="2"/></svg><div class="t" style="left:416px;top:48px;letter-spacing:-0.35px">Za sve banke</div><div class="t" style="left:187px;top:68px;letter-spacing:-0.3px">(Prazno =&gt; "SVI"; "+" =&gt; Pretraga)</div><div class="t" style="left:60px;width:176px;text-align:right;top:96px;font-size:14px;letter-spacing:-0.35px">Tip fajla za izvoz:</div><div class="t" style="left:60px;width:180px;text-align:right;top:124px;font-size:14px;letter-spacing:-0.33px">Specifikacijom obuhvatiti:</div><div class="inp" style="left:256px;top:92px;width:243px;height:22px;border-color:#c0c0c0"></div><div class="t" style="left:259px;top:95px">105 - AIK Banka</div><div class="a" style="left:479px;top:93px;width:19px;height:20px;background:#e1e1e1"></div><svg class="a" style="left:484px;top:100px" width="10" height="6"><path d="M0 0h10l-5 6z" fill="#000"/></svg><div class="inp" style="left:256px;top:120px;width:243px;height:22px;border-color:#c0c0c0"></div><div class="t" style="left:259px;top:123px">Sve uplate</div><div class="a" style="left:479px;top:121px;width:19px;height:20px;background:#c8c8c8"></div><svg class="a" style="left:484px;top:128px" width="10" height="6"><path d="M0 0h10l-5 6z" fill="#000"/></svg><div class="pnl" style="left:2px;top:161px;width:402px;height:29px"></div><div class="t" style="left:19px;top:168px;letter-spacing:0.1px">FAJLOVI SE FORMIRAJU ZA SVE RADNIKE</div><div class="pnl" style="left:405px;top:161px;width:108px;height:29px"></div><div class="btn" style="left:407px;top:163px;width:104px;height:25px;line-height:22px">F10 - Potvrdi</div><div class="pnl" style="left:514px;top:161px;width:110px;height:29px"></div><div class="btn" style="left:516px;top:163px;width:105px;height:25px;line-height:22px">Esc - Odustani</div><div class="t" style="left:62px;top:116px;font-size:27px;line-height:34px;font-weight:bold;color:#ed1c24;letter-spacing:0">2</div></div>
<div class="a" style="left:696px;top:820px;width:566px;height:50px;background:#fff;border:1px solid #000;overflow:hidden"><div class="a" style="left:0;top:0px;width:564px;height:16px;line-height:17px;padding-left:2px;letter-spacing:-0.06px;background:#0078d7;color:#fff;outline:1px dotted #f0d090;outline-offset:-1px;">Sve uplate</div><div class="a" style="left:0;top:16px;width:564px;height:16px;line-height:17px;padding-left:2px;letter-spacing:-0.06px;">Samo uplate kod kojih je broj tekućeg računa upisan kao POZIV na broj odobrenja (PnbTrn = "P")</div><div class="a" style="left:0;top:32px;width:564px;height:16px;line-height:17px;padding-left:2px;letter-spacing:-0.06px;">Samo uplate kod kojih je broj tekućeg računa upisan kao RAČUN odobrenja (PnbTrn = "R")</div></div>
<div class="a" style="left:437px;top:792px;width:838px;height:90px;border:5px solid #ed1c24"></div>
</body></html>
